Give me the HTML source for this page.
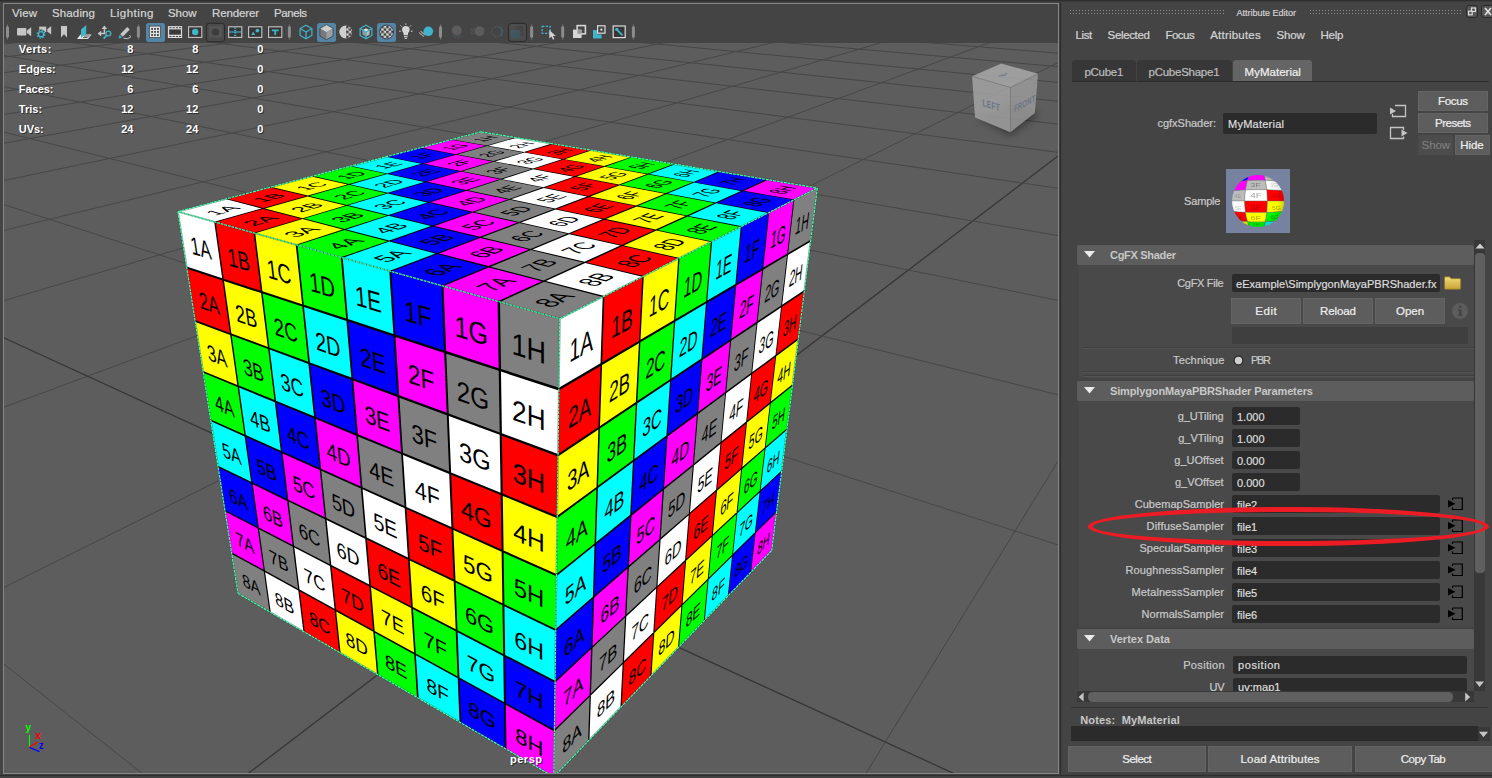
<!DOCTYPE html>
<html><head><meta charset="utf-8"><title>Maya</title>
<style>
html,body{margin:0;padding:0}
body{width:1492px;height:778px;overflow:hidden;background:#444;position:relative;font-family:"Liberation Sans",sans-serif;font-size:12px;color:#ccc}
.abs{position:absolute}
.t{position:absolute;white-space:pre;-webkit-text-stroke:0.22px}
svg{display:block}
#topstrip{left:0;top:0;width:1492px;height:1px;background:#2e2e2e;box-shadow:0 1px 0 #3b3b3b}
#vpframe{left:3px;top:3px;width:1054px;height:769px;border:1px solid #878787}
#split{left:1060px;top:2px;width:1px;height:773px;background:#2e2e2e;box-shadow:-1px 0 0 #3e3e3e,1px 0 0 #414141}
#botstrip{left:0;top:775px;width:1492px;height:1px;background:#2e2e2e;box-shadow:0 -1px 0 #404040,0 1px 0 #414141}

</style></head>
<body>
<div class="abs" id="topstrip"></div>
<div class="abs" id="vpframe"></div>
<div class="abs" id="split"></div>
<div class="abs" id="botstrip"></div>
<svg id="vp" width="1054" height="730" viewBox="4 43 1054 730" style="position:absolute;left:4px;top:43px">
<rect x="4" y="43" width="1054" height="730" fill="#5d5d5d"/>
<g stroke-width="1"><line x1="-50.0" y1="38.2" x2="398.6" y2="-8.3" stroke="#474747"/><line x1="-50.0" y1="50.0" x2="442.0" y2="-5.0" stroke="#474747"/><line x1="-50.0" y1="63.6" x2="488.2" y2="-1.5" stroke="#474747"/><line x1="-50.0" y1="79.8" x2="537.4" y2="2.2" stroke="#474747"/><line x1="-50.0" y1="99.3" x2="590.1" y2="6.2" stroke="#474747"/><line x1="-50.0" y1="123.2" x2="646.6" y2="10.5" stroke="#474747"/><line x1="-50.0" y1="153.1" x2="707.3" y2="15.1" stroke="#474747"/><line x1="-50.0" y1="191.8" x2="772.7" y2="20.0" stroke="#474747"/><line x1="-50.0" y1="243.6" x2="843.4" y2="25.4" stroke="#474747"/><line x1="-50.0" y1="316.5" x2="920.1" y2="31.2" stroke="#474747"/><line x1="-50.0" y1="427.1" x2="1003.5" y2="37.5" stroke="#474747"/><line x1="-50.0" y1="614.4" x2="1094.6" y2="44.4" stroke="#474747"/><line x1="-50.0" y1="621.4" x2="239.0" y2="850.0" stroke="#474747"/><line x1="147.8" y1="850.0" x2="1150.0" y2="85.8" stroke="#363636" stroke-width="1.3"/><line x1="-50.0" y1="313.1" x2="1120.7" y2="850.0" stroke="#363636" stroke-width="1.3"/><line x1="818.9" y1="850.0" x2="1150.0" y2="311.4" stroke="#474747"/><line x1="-50.0" y1="187.2" x2="1150.0" y2="574.6" stroke="#474747"/><line x1="-50.0" y1="118.7" x2="1150.0" y2="417.7" stroke="#474747"/><line x1="-50.0" y1="75.7" x2="1150.0" y2="319.0" stroke="#474747"/><line x1="-50.0" y1="46.2" x2="1150.0" y2="251.3" stroke="#474747"/><line x1="4.0" y1="32.6" x2="1150.0" y2="201.9" stroke="#474747"/><line x1="78.2" y1="24.9" x2="1150.0" y2="164.3" stroke="#474747"/><line x1="145.0" y1="18.0" x2="1150.0" y2="134.8" stroke="#474747"/><line x1="205.4" y1="11.8" x2="1150.0" y2="110.9" stroke="#474747"/><line x1="260.3" y1="6.1" x2="1150.0" y2="91.2" stroke="#474747"/><line x1="310.5" y1="0.9" x2="1150.0" y2="74.7" stroke="#474747"/><line x1="356.4" y1="-3.9" x2="1150.0" y2="60.7" stroke="#474747"/><line x1="398.6" y1="-8.3" x2="1150.0" y2="48.6" stroke="#474747"/></g>
<polygon points="177.9,211.6 481.0,131.8 817.3,188.0 559.8,318.7" fill="#000"/>
<polygon points="177.9,211.6 225.3,199.1 261.5,208.5 214.2,221.8" fill="#ffffff"/>
<polygon points="227.1,198.7 270.0,187.4 306.1,196.1 263.4,208.0" fill="#ff0000"/>
<polygon points="271.7,186.9 311.4,176.4 347.4,184.5 307.8,195.6" fill="#ffff00"/>
<polygon points="313.0,176.0 350.0,166.3 385.7,173.8 349.0,184.1" fill="#00ff00"/>
<polygon points="351.5,165.9 385.9,156.8 421.3,163.8 387.1,173.4" fill="#00ffff"/>
<polygon points="387.3,156.5 419.5,148.0 454.5,154.5 422.7,163.4" fill="#0000ff"/>
<polygon points="420.8,147.6 451.0,139.7 485.6,145.8 455.8,154.2" fill="#ff00ff"/>
<polygon points="452.2,139.4 481.0,131.8 515.3,137.5 486.8,145.5" fill="#808080"/>
<polygon points="215.7,222.2 263.0,208.9 300.8,218.7 253.6,232.8" fill="#ff0000"/>
<polygon points="264.9,208.4 307.6,196.4 345.2,205.4 302.7,218.2" fill="#ffff00"/>
<polygon points="309.3,195.9 348.9,184.8 386.2,193.2 346.9,204.9" fill="#00ff00"/>
<polygon points="350.5,184.4 387.2,174.1 424.1,181.9 387.8,192.7" fill="#00ffff"/>
<polygon points="388.6,173.7 422.8,164.1 459.4,171.3 425.6,181.4" fill="#0000ff"/>
<polygon points="424.2,163.7 456.0,154.8 492.2,161.5 460.7,170.9" fill="#ff00ff"/>
<polygon points="457.3,154.4 487.1,146.1 522.8,152.4 493.4,161.1" fill="#808080"/>
<polygon points="488.3,145.7 516.7,137.7 552.0,143.6 523.9,152.0" fill="#ffffff"/>
<polygon points="255.2,233.3 302.5,219.1 342.7,229.6 295.7,244.7" fill="#ffff00"/>
<polygon points="304.3,218.6 346.8,205.8 386.8,215.4 344.6,229.0" fill="#00ff00"/>
<polygon points="348.5,205.3 387.8,193.6 427.3,202.4 388.5,214.9" fill="#00ffff"/>
<polygon points="389.4,193.1 425.7,182.2 464.8,190.4 428.9,201.9" fill="#0000ff"/>
<polygon points="427.2,181.8 460.9,171.6 499.5,179.3 466.3,189.9" fill="#ff00ff"/>
<polygon points="462.3,171.2 493.7,161.8 531.8,168.9 500.9,178.8" fill="#808080"/>
<polygon points="495.0,161.4 524.3,152.6 561.8,159.3 533.0,168.5" fill="#ffffff"/>
<polygon points="525.5,152.3 553.5,143.9 590.5,150.1 563.0,158.9" fill="#ff0000"/>
<polygon points="297.5,245.1 344.5,230.0 387.5,241.2 340.8,257.3" fill="#00ff00"/>
<polygon points="346.3,229.4 388.5,215.8 431.0,226.1 389.3,240.5" fill="#00ffff"/>
<polygon points="390.2,215.3 429.0,202.8 471.1,212.2 432.7,225.5" fill="#0000ff"/>
<polygon points="430.6,202.3 466.5,190.8 507.9,199.5 472.6,211.7" fill="#ff00ff"/>
<polygon points="467.9,190.3 501.2,179.6 542.0,187.6 509.3,199.0" fill="#808080"/>
<polygon points="502.5,179.2 533.4,169.2 573.6,176.7 543.3,187.2" fill="#ffffff"/>
<polygon points="534.7,168.8 563.5,159.5 603.0,166.5 574.8,176.3" fill="#ff0000"/>
<polygon points="564.6,159.2 592.0,150.3 631.0,156.9 604.2,166.1" fill="#ffff00"/>
<polygon points="342.7,257.8 389.3,241.6 435.3,253.6 389.3,270.9" fill="#00ffff"/>
<polygon points="391.1,241.0 432.9,226.5 478.3,237.4 437.1,252.9" fill="#0000ff"/>
<polygon points="434.5,225.9 472.9,212.6 517.6,222.6 479.9,236.8" fill="#ff00ff"/>
<polygon points="474.4,212.1 509.7,199.8 553.7,209.1 519.1,222.1" fill="#808080"/>
<polygon points="511.1,199.3 543.8,188.0 587.0,196.5 555.1,208.5" fill="#ffffff"/>
<polygon points="545.1,187.5 575.4,177.0 617.9,184.9 588.3,196.1" fill="#ff0000"/>
<polygon points="576.6,176.6 604.7,166.8 646.5,174.2 619.0,184.5" fill="#ffff00"/>
<polygon points="605.8,166.4 632.6,157.1 673.6,164.0 647.6,173.8" fill="#00ff00"/>
<polygon points="391.3,271.4 437.3,254.1 486.7,266.9 441.4,285.5" fill="#0000ff"/>
<polygon points="439.1,253.4 480.2,237.9 528.8,249.6 488.5,266.1" fill="#ff00ff"/>
<polygon points="481.9,237.3 519.5,223.1 567.2,233.8 530.4,248.9" fill="#808080"/>
<polygon points="521.0,222.5 555.6,209.5 602.4,219.3 568.7,233.2" fill="#ffffff"/>
<polygon points="557.0,208.9 588.9,196.9 634.8,206.0 603.7,218.7" fill="#ff0000"/>
<polygon points="590.2,196.4 619.7,185.3 664.7,193.7 636.0,205.5" fill="#ffff00"/>
<polygon points="620.9,184.8 648.2,174.5 692.4,182.3 665.8,193.2" fill="#00ff00"/>
<polygon points="649.3,174.1 675.3,164.3 718.5,171.5 693.4,181.9" fill="#00ffff"/>
<polygon points="443.5,286.1 488.8,267.4 541.9,281.2 497.6,301.3" fill="#ff00ff"/>
<polygon points="490.6,266.7 530.9,250.1 582.9,262.6 543.6,280.4" fill="#808080"/>
<polygon points="532.5,249.4 569.2,234.2 620.2,245.6 584.5,261.8" fill="#ffffff"/>
<polygon points="570.7,233.6 604.4,219.7 654.3,230.2 621.6,245.0" fill="#ff0000"/>
<polygon points="605.8,219.1 636.8,206.4 685.5,216.0 655.6,229.6" fill="#ffff00"/>
<polygon points="638.0,205.8 666.6,194.0 714.3,202.9 686.7,215.4" fill="#00ff00"/>
<polygon points="667.8,193.6 694.2,182.6 740.9,190.9 715.4,202.4" fill="#00ffff"/>
<polygon points="695.3,182.2 720.4,171.8 766.0,179.5 741.9,190.4" fill="#0000ff"/>
<polygon points="500.0,301.9 544.2,281.7 602.7,296.9 559.8,318.7" fill="#808080"/>
<polygon points="545.9,281.0 585.2,263.1 642.3,276.8 604.4,296.1" fill="#ffffff"/>
<polygon points="586.7,262.4 622.4,246.1 678.2,258.6 643.8,276.1" fill="#ff0000"/>
<polygon points="623.8,245.5 656.4,230.6 710.8,242.0 679.5,257.9" fill="#ffff00"/>
<polygon points="657.7,230.0 687.6,216.4 740.7,226.9 712.1,241.4" fill="#00ff00"/>
<polygon points="688.8,215.9 716.4,203.3 768.2,213.0 741.9,226.3" fill="#00ffff"/>
<polygon points="717.5,202.8 742.9,191.2 793.4,200.1 769.2,212.4" fill="#0000ff"/>
<polygon points="743.9,190.8 768.0,179.8 817.3,188.0 794.4,199.6" fill="#ff00ff"/>
<g font-family="Liberation Sans, Arial, sans-serif" font-size="45" text-anchor="middle" fill="#000">
<text transform="matrix(0.4826 -0.1311 0.3703 0.0996 220.77 210.04)" y="20">1A</text>
<text transform="matrix(0.4457 -0.1210 0.3696 0.0920 267.15 197.44)" y="20">1B</text>
<text transform="matrix(0.4129 -0.1121 0.3680 0.0852 310.05 185.79)" y="20">1C</text>
<text transform="matrix(0.3836 -0.1042 0.3657 0.0792 349.85 174.98)" y="20">1D</text>
<text transform="matrix(0.3573 -0.0970 0.3628 0.0737 386.87 164.93)" y="20">1E</text>
<text transform="matrix(0.3336 -0.0906 0.3594 0.0688 421.40 155.55)" y="20">1F</text>
<text transform="matrix(0.3122 -0.0848 0.3557 0.0644 453.67 146.79)" y="20">1G</text>
<text transform="matrix(0.2928 -0.0795 0.3518 0.0604 483.91 138.58)" y="20">1H</text>
<text transform="matrix(0.4820 -0.1395 0.3943 0.1061 258.98 220.32)" y="20">2A</text>
<text transform="matrix(0.4441 -0.1286 0.3926 0.0977 305.24 206.92)" y="20">2B</text>
<text transform="matrix(0.4104 -0.1188 0.3900 0.0903 347.93 194.56)" y="20">2C</text>
<text transform="matrix(0.3805 -0.1102 0.3867 0.0837 387.45 183.12)" y="20">2D</text>
<text transform="matrix(0.3537 -0.1024 0.3829 0.0778 424.14 172.50)" y="20">2E</text>
<text transform="matrix(0.3296 -0.0954 0.3786 0.0725 458.29 162.62)" y="20">2F</text>
<text transform="matrix(0.3080 -0.0892 0.3741 0.0677 490.15 153.39)" y="20">2G</text>
<text transform="matrix(0.2884 -0.0835 0.3693 0.0634 519.95 144.76)" y="20">2H</text>
<text transform="matrix(0.4803 -0.1489 0.4207 0.1132 299.70 231.27)" y="20">3A</text>
<text transform="matrix(0.4413 -0.1368 0.4178 0.1040 345.74 217.00)" y="20">3B</text>
<text transform="matrix(0.4069 -0.1261 0.4140 0.0959 388.12 203.87)" y="20">3C</text>
<text transform="matrix(0.3764 -0.1167 0.4096 0.0887 427.25 191.74)" y="20">3D</text>
<text transform="matrix(0.3491 -0.1082 0.4047 0.0822 463.50 180.50)" y="20">3E</text>
<text transform="matrix(0.3248 -0.1007 0.3994 0.0765 497.17 170.06)" y="20">3F</text>
<text transform="matrix(0.3028 -0.0939 0.3939 0.0713 528.54 160.34)" y="20">3G</text>
<text transform="matrix(0.2831 -0.0877 0.3882 0.0667 557.82 151.27)" y="20">3H</text>
<text transform="matrix(0.4772 -0.1592 0.4498 0.1210 343.20 242.98)" y="20">4A</text>
<text transform="matrix(0.4372 -0.1458 0.4455 0.1109 388.88 227.74)" y="20">4B</text>
<text transform="matrix(0.4021 -0.1341 0.4403 0.1020 430.81 213.75)" y="20">4C</text>
<text transform="matrix(0.3710 -0.1238 0.4345 0.0941 469.44 200.87)" y="20">4D</text>
<text transform="matrix(0.3434 -0.1146 0.4284 0.0871 505.14 188.96)" y="20">4E</text>
<text transform="matrix(0.3188 -0.1063 0.4219 0.0808 538.23 177.93)" y="20">4F</text>
<text transform="matrix(0.2967 -0.0990 0.4153 0.0752 568.98 167.67)" y="20">4G</text>
<text transform="matrix(0.2769 -0.0924 0.4086 0.0702 597.65 158.11)" y="20">4H</text>
<text transform="matrix(0.4725 -0.1706 0.4821 0.1297 389.77 255.50)" y="20">5A</text>
<text transform="matrix(0.4316 -0.1558 0.4760 0.1185 434.93 239.20)" y="20">5B</text>
<text transform="matrix(0.3958 -0.1429 0.4692 0.1086 476.26 224.28)" y="20">5C</text>
<text transform="matrix(0.3643 -0.1315 0.4619 0.1000 514.24 210.57)" y="20">5D</text>
<text transform="matrix(0.3364 -0.1215 0.4542 0.0923 549.25 197.93)" y="20">5E</text>
<text transform="matrix(0.3116 -0.1125 0.4464 0.0855 581.63 186.24)" y="20">5F</text>
<text transform="matrix(0.2895 -0.1045 0.4386 0.0794 611.66 175.39)" y="20">5G</text>
<text transform="matrix(0.2696 -0.0973 0.4307 0.0740 639.60 165.31)" y="20">5H</text>
<text transform="matrix(0.4658 -0.1833 0.5180 0.1393 439.74 268.95)" y="20">6A</text>
<text transform="matrix(0.4241 -0.1669 0.5098 0.1269 484.19 251.46)" y="20">6B</text>
<text transform="matrix(0.3878 -0.1526 0.5010 0.1160 524.74 235.50)" y="20">6C</text>
<text transform="matrix(0.3560 -0.1401 0.4918 0.1065 561.90 220.88)" y="20">6D</text>
<text transform="matrix(0.3279 -0.1290 0.4825 0.0981 596.06 207.44)" y="20">6E</text>
<text transform="matrix(0.3030 -0.1192 0.4732 0.0906 627.59 195.04)" y="20">6F</text>
<text transform="matrix(0.2809 -0.1105 0.4638 0.0840 656.76 183.56)" y="20">6G</text>
<text transform="matrix(0.2611 -0.1027 0.4546 0.0781 683.84 172.91)" y="20">6H</text>
<text transform="matrix(0.4567 -0.1974 0.5580 0.1501 493.50 283.41)" y="20">7A</text>
<text transform="matrix(0.4144 -0.1791 0.5473 0.1362 537.00 264.61)" y="20">7B</text>
<text transform="matrix(0.3777 -0.1633 0.5361 0.1241 576.57 247.50)" y="20">7C</text>
<text transform="matrix(0.3457 -0.1494 0.5248 0.1136 612.70 231.88)" y="20">7D</text>
<text transform="matrix(0.3176 -0.1373 0.5135 0.1044 645.84 217.56)" y="20">7E</text>
<text transform="matrix(0.2928 -0.1266 0.5023 0.0962 676.34 204.38)" y="20">7F</text>
<text transform="matrix(0.2708 -0.1170 0.4913 0.0890 704.50 192.20)" y="20">7G</text>
<text transform="matrix(0.2512 -0.1086 0.4805 0.0825 730.57 180.93)" y="20">7H</text>
<text transform="matrix(0.4447 -0.2133 0.6029 0.1622 551.50 299.01)" y="20">8A</text>
<text transform="matrix(0.4020 -0.1928 0.5891 0.1466 593.78 278.74)" y="20">8B</text>
<text transform="matrix(0.3652 -0.1751 0.5751 0.1332 632.09 260.36)" y="20">8C</text>
<text transform="matrix(0.3332 -0.1598 0.5613 0.1215 666.98 243.63)" y="20">8D</text>
<text transform="matrix(0.3052 -0.1464 0.5476 0.1113 698.87 228.34)" y="20">8E</text>
<text transform="matrix(0.2807 -0.1346 0.5343 0.1023 728.14 214.30)" y="20">8F</text>
<text transform="matrix(0.2589 -0.1242 0.5213 0.0944 755.10 201.37)" y="20">8G</text>
<text transform="matrix(0.2397 -0.1149 0.5087 0.0874 780.01 189.42)" y="20">8H</text>
</g>
<polygon points="177.9,211.6 559.8,318.7 553.8,776.8 238.0,593.5" fill="#000"/>
<polygon points="177.9,211.6 214.2,221.8 222.2,278.2 186.6,266.6" fill="#ffffff"/>
<polygon points="215.7,222.2 253.6,232.8 260.8,290.8 223.7,278.7" fill="#ff0000"/>
<polygon points="255.2,233.3 295.7,244.7 302.1,304.2 262.4,291.3" fill="#ffff00"/>
<polygon points="297.5,245.1 340.8,257.3 346.2,318.5 303.8,304.8" fill="#00ff00"/>
<polygon points="342.7,257.8 389.3,270.9 393.4,333.9 348.0,319.1" fill="#00ffff"/>
<polygon points="391.3,271.4 441.4,285.5 444.1,350.4 395.3,334.6" fill="#0000ff"/>
<polygon points="443.5,286.1 497.6,301.3 498.7,368.2 446.2,351.1" fill="#ff00ff"/>
<polygon points="500.0,301.9 559.8,318.7 558.9,387.8 501.0,368.9" fill="#808080"/>
<polygon points="186.9,268.8 222.5,280.4 229.9,332.9 195.0,320.0" fill="#ff0000"/>
<polygon points="224.0,280.9 261.1,293.1 267.8,346.9 231.4,333.4" fill="#ffff00"/>
<polygon points="262.7,293.6 302.3,306.6 308.2,361.7 269.4,347.4" fill="#00ff00"/>
<polygon points="304.0,307.1 346.4,321.0 351.3,377.6 309.9,362.4" fill="#00ffff"/>
<polygon points="348.2,321.6 393.5,336.4 397.3,394.6 353.1,378.3" fill="#0000ff"/>
<polygon points="395.5,337.1 444.2,353.0 446.7,412.8 399.2,395.3" fill="#ff00ff"/>
<polygon points="446.3,353.7 498.7,370.8 499.7,432.4 448.7,413.6" fill="#808080"/>
<polygon points="501.0,371.6 558.8,390.5 558.0,453.9 501.9,433.2" fill="#ffffff"/>
<polygon points="195.3,322.1 230.2,335.0 237.3,384.9 203.0,370.9" fill="#ffff00"/>
<polygon points="231.7,335.6 268.1,349.1 274.5,400.1 238.8,385.5" fill="#00ff00"/>
<polygon points="269.7,349.6 308.4,364.0 314.0,416.3 276.0,400.8" fill="#00ffff"/>
<polygon points="310.1,364.6 351.5,379.9 356.1,433.5 315.7,417.0" fill="#0000ff"/>
<polygon points="353.3,380.6 397.5,397.0 401.0,451.9 357.9,434.2" fill="#ff00ff"/>
<polygon points="399.4,397.7 446.8,415.2 449.1,471.6 402.9,452.7" fill="#808080"/>
<polygon points="448.8,416.0 499.7,434.8 500.6,492.7 451.1,472.4" fill="#ffffff"/>
<polygon points="501.9,435.7 558.0,456.4 557.2,515.8 502.8,493.6" fill="#ff0000"/>
<polygon points="203.3,372.8 237.6,386.9 244.4,434.5 210.6,419.4" fill="#00ff00"/>
<polygon points="239.1,387.5 274.8,402.2 280.8,450.8 245.8,435.1" fill="#00ffff"/>
<polygon points="276.3,402.8 314.2,418.4 319.5,468.1 282.3,451.4" fill="#0000ff"/>
<polygon points="315.9,419.1 356.3,435.7 360.7,486.5 321.1,468.8" fill="#ff00ff"/>
<polygon points="358.0,436.4 401.2,454.1 404.6,506.1 362.4,487.3" fill="#808080"/>
<polygon points="403.0,454.9 449.2,473.9 451.4,527.1 406.4,507.0" fill="#ffffff"/>
<polygon points="451.2,474.7 500.7,495.0 501.5,549.5 453.4,528.0" fill="#ff0000"/>
<polygon points="502.8,495.9 557.2,518.2 556.4,574.1 503.6,550.5" fill="#ffff00"/>
<polygon points="210.9,421.2 244.6,436.4 251.1,481.7 217.9,465.7" fill="#00ffff"/>
<polygon points="246.0,437.0 281.1,452.7 286.8,499.0 252.5,482.4" fill="#0000ff"/>
<polygon points="282.6,453.4 319.8,470.1 324.8,517.3 288.3,499.7" fill="#ff00ff"/>
<polygon points="321.3,470.8 360.9,488.6 365.1,536.8 326.3,518.1" fill="#808080"/>
<polygon points="362.6,489.3 404.7,508.3 407.9,557.5 366.7,537.6" fill="#ffffff"/>
<polygon points="406.5,509.1 451.5,529.3 453.6,579.6 409.7,558.4" fill="#ff0000"/>
<polygon points="453.4,530.1 501.6,551.7 502.4,603.2 455.5,580.5" fill="#ffff00"/>
<polygon points="503.6,552.7 556.4,576.3 555.7,629.0 504.4,604.2" fill="#00ff00"/>
<polygon points="218.2,467.5 251.3,483.5 257.5,526.8 224.9,509.9" fill="#0000ff"/>
<polygon points="252.7,484.2 287.1,500.9 292.6,544.9 258.8,527.5" fill="#ff00ff"/>
<polygon points="288.6,501.6 325.0,519.2 329.8,564.2 294.0,545.7" fill="#808080"/>
<polygon points="326.6,520.0 365.2,538.8 369.2,584.6 331.3,565.0" fill="#ffffff"/>
<polygon points="366.9,539.6 408.0,559.5 411.1,606.2 370.8,585.4" fill="#ff0000"/>
<polygon points="409.8,560.4 453.7,581.6 455.7,629.3 412.8,607.1" fill="#ffff00"/>
<polygon points="455.6,582.6 502.4,605.3 503.2,653.9 457.5,630.3" fill="#00ff00"/>
<polygon points="504.4,606.2 555.7,631.1 555.0,680.7 505.2,654.9" fill="#00ffff"/>
<polygon points="225.1,511.6 257.7,528.5 263.6,569.8 231.5,552.2" fill="#ff00ff"/>
<polygon points="259.1,529.2 292.8,546.7 298.1,588.8 264.9,570.6" fill="#808080"/>
<polygon points="294.3,547.5 330.0,566.0 334.5,608.8 299.5,589.6" fill="#ffffff"/>
<polygon points="331.5,566.8 369.4,586.4 373.1,630.0 336.0,609.6" fill="#ff0000"/>
<polygon points="371.0,587.3 411.2,608.1 414.1,652.5 374.7,630.9" fill="#ffff00"/>
<polygon points="412.9,609.0 455.7,631.2 457.6,676.5 415.8,653.5" fill="#00ff00"/>
<polygon points="457.6,632.2 503.2,655.9 503.9,701.9 459.4,677.5" fill="#00ffff"/>
<polygon points="505.2,656.9 555.0,682.7 554.4,729.6 505.9,703.0" fill="#0000ff"/>
<polygon points="231.8,553.9 263.8,571.5 269.5,611.8 238.0,593.5" fill="#808080"/>
<polygon points="265.1,572.2 298.3,590.5 303.4,631.5 270.8,612.6" fill="#ffffff"/>
<polygon points="299.7,591.3 334.7,610.6 339.2,652.2 304.8,632.3" fill="#ff0000"/>
<polygon points="336.2,611.4 373.3,631.8 377.0,674.2 340.6,653.1" fill="#ffff00"/>
<polygon points="374.9,632.7 414.2,654.4 417.0,697.4 378.5,675.1" fill="#00ff00"/>
<polygon points="415.9,655.3 457.7,678.3 459.5,722.1 418.7,698.4" fill="#00ffff"/>
<polygon points="459.5,679.3 504.0,703.8 504.7,748.3 461.3,723.1" fill="#0000ff"/>
<polygon points="505.9,704.8 554.4,731.5 553.8,776.8 506.5,749.4" fill="#ff00ff"/>
<g font-family="Liberation Sans, Arial, sans-serif" font-size="45" text-anchor="middle" fill="#000">
<text transform="matrix(0.3668 0.1114 0.0850 0.5680 200.44 245.50)" y="20">1A</text>
<text transform="matrix(0.3907 0.1187 0.0777 0.5832 238.30 256.99)" y="20">1B</text>
<text transform="matrix(0.4171 0.1267 0.0692 0.5992 278.67 269.26)" y="20">1C</text>
<text transform="matrix(0.4462 0.1356 0.0594 0.6161 321.81 282.36)" y="20">1D</text>
<text transform="matrix(0.4785 0.1454 0.0480 0.6338 368.02 296.40)" y="20">1E</text>
<text transform="matrix(0.5145 0.1563 0.0346 0.6526 417.64 311.47)" y="20">1F</text>
<text transform="matrix(0.5546 0.1685 0.0191 0.6725 471.05 327.70)" y="20">1G</text>
<text transform="matrix(0.5997 0.1822 0.0010 0.6935 528.72 345.22)" y="20">1H</text>
<text transform="matrix(0.3601 0.1254 0.0808 0.5399 208.73 300.87)" y="20">2A</text>
<text transform="matrix(0.3830 0.1334 0.0737 0.5535 245.87 313.81)" y="20">2B</text>
<text transform="matrix(0.4082 0.1422 0.0656 0.5677 285.41 327.58)" y="20">2C</text>
<text transform="matrix(0.4359 0.1518 0.0562 0.5826 327.59 342.27)" y="20">2D</text>
<text transform="matrix(0.4665 0.1625 0.0453 0.5983 372.68 357.98)" y="20">2E</text>
<text transform="matrix(0.5005 0.1743 0.0326 0.6147 421.00 374.81)" y="20">2F</text>
<text transform="matrix(0.5383 0.1875 0.0180 0.6320 472.91 392.89)" y="20">2G</text>
<text transform="matrix(0.5806 0.2022 0.0009 0.6501 528.81 412.36)" y="20">2H</text>
<text transform="matrix(0.3537 0.1380 0.0769 0.5139 216.61 353.55)" y="20">3A</text>
<text transform="matrix(0.3756 0.1465 0.0701 0.5260 253.05 367.77)" y="20">3B</text>
<text transform="matrix(0.3996 0.1559 0.0622 0.5386 291.79 382.88)" y="20">3C</text>
<text transform="matrix(0.4260 0.1662 0.0532 0.5518 333.05 398.98)" y="20">3D</text>
<text transform="matrix(0.4551 0.1775 0.0428 0.5656 377.08 416.15)" y="20">3E</text>
<text transform="matrix(0.4873 0.1901 0.0308 0.5800 424.17 434.52)" y="20">3F</text>
<text transform="matrix(0.5230 0.2040 0.0169 0.5950 474.65 454.21)" y="20">3G</text>
<text transform="matrix(0.5628 0.2196 0.0008 0.6107 528.90 475.38)" y="20">3H</text>
<text transform="matrix(0.3474 0.1492 0.0733 0.4897 224.12 403.71)" y="20">4A</text>
<text transform="matrix(0.3684 0.1582 0.0667 0.5005 259.89 419.08)" y="20">4B</text>
<text transform="matrix(0.3914 0.1681 0.0591 0.5117 297.86 435.38)" y="20">4C</text>
<text transform="matrix(0.4165 0.1789 0.0505 0.5234 338.23 452.72)" y="20">4D</text>
<text transform="matrix(0.4442 0.1907 0.0405 0.5355 381.24 471.19)" y="20">4E</text>
<text transform="matrix(0.4747 0.2038 0.0291 0.5481 427.16 490.91)" y="20">4F</text>
<text transform="matrix(0.5085 0.2184 0.0160 0.5612 476.29 512.00)" y="20">4G</text>
<text transform="matrix(0.5460 0.2345 0.0008 0.5748 528.98 534.63)" y="20">4H</text>
<text transform="matrix(0.3414 0.1592 0.0699 0.4672 231.27 451.54)" y="20">5A</text>
<text transform="matrix(0.3615 0.1686 0.0635 0.4768 266.40 467.93)" y="20">5B</text>
<text transform="matrix(0.3834 0.1788 0.0562 0.4868 303.63 485.29)" y="20">5C</text>
<text transform="matrix(0.4074 0.1900 0.0479 0.4971 343.15 503.73)" y="20">5D</text>
<text transform="matrix(0.4338 0.2023 0.0384 0.5078 385.19 523.34)" y="20">5E</text>
<text transform="matrix(0.4628 0.2159 0.0275 0.5188 429.99 544.23)" y="20">5F</text>
<text transform="matrix(0.4948 0.2308 0.0151 0.5302 477.84 566.55)" y="20">5G</text>
<text transform="matrix(0.5302 0.2473 0.0007 0.5419 529.06 590.44)" y="20">5H</text>
<text transform="matrix(0.3355 0.1682 0.0668 0.4461 238.10 497.20)" y="20">6A</text>
<text transform="matrix(0.3548 0.1779 0.0606 0.4548 272.60 514.49)" y="20">6B</text>
<text transform="matrix(0.3758 0.1884 0.0536 0.4636 309.11 532.80)" y="20">6C</text>
<text transform="matrix(0.3987 0.1999 0.0456 0.4728 347.82 552.21)" y="20">6D</text>
<text transform="matrix(0.4239 0.2125 0.0365 0.4822 388.93 572.82)" y="20">6E</text>
<text transform="matrix(0.4514 0.2263 0.0261 0.4918 432.68 594.75)" y="20">6F</text>
<text transform="matrix(0.4818 0.2415 0.0143 0.5017 479.31 618.13)" y="20">6G</text>
<text transform="matrix(0.5153 0.2583 0.0007 0.5118 529.13 643.11)" y="20">6H</text>
<text transform="matrix(0.3298 0.1762 0.0638 0.4265 244.63 540.82)" y="20">7A</text>
<text transform="matrix(0.3483 0.1861 0.0578 0.4342 278.52 558.93)" y="20">7B</text>
<text transform="matrix(0.3685 0.1969 0.0511 0.4421 314.35 578.07)" y="20">7C</text>
<text transform="matrix(0.3904 0.2086 0.0434 0.4502 352.27 598.34)" y="20">7D</text>
<text transform="matrix(0.4144 0.2214 0.0347 0.4584 392.49 619.83)" y="20">7E</text>
<text transform="matrix(0.4406 0.2354 0.0248 0.4668 435.22 642.66)" y="20">7F</text>
<text transform="matrix(0.4694 0.2508 0.0135 0.4754 480.70 666.97)" y="20">7G</text>
<text transform="matrix(0.5012 0.2678 0.0007 0.4841 529.20 692.88)" y="20">7H</text>
<text transform="matrix(0.3242 0.1834 0.0611 0.4082 250.88 582.55)" y="20">8A</text>
<text transform="matrix(0.3421 0.1935 0.0553 0.4150 284.18 601.38)" y="20">8B</text>
<text transform="matrix(0.3614 0.2044 0.0488 0.4220 319.34 621.27)" y="20">8C</text>
<text transform="matrix(0.3824 0.2163 0.0414 0.4291 356.51 642.29)" y="20">8D</text>
<text transform="matrix(0.4053 0.2292 0.0330 0.4364 395.88 664.56)" y="20">8E</text>
<text transform="matrix(0.4303 0.2434 0.0236 0.4437 437.64 688.18)" y="20">8F</text>
<text transform="matrix(0.4577 0.2589 0.0128 0.4512 482.01 713.28)" y="20">8G</text>
<text transform="matrix(0.4878 0.2759 0.0006 0.4586 529.26 740.00)" y="20">8H</text>
</g>
<polygon points="559.8,318.7 817.3,188.0 771.7,550.6 553.8,776.8" fill="#000"/>
<polygon points="559.8,318.7 602.7,296.9 600.5,363.3 558.9,387.8" fill="#ffffff"/>
<polygon points="604.4,296.1 642.3,276.8 639.1,340.7 602.2,362.3" fill="#ff0000"/>
<polygon points="643.8,276.1 678.2,258.6 674.1,320.1 640.5,339.8" fill="#ffff00"/>
<polygon points="679.5,257.9 710.8,242.0 706.1,301.3 675.4,319.3" fill="#00ff00"/>
<polygon points="712.1,241.4 740.7,226.9 735.4,284.0 707.3,300.5" fill="#00ffff"/>
<polygon points="741.9,226.3 768.2,213.0 762.4,268.2 736.5,283.4" fill="#0000ff"/>
<polygon points="769.2,212.4 793.4,200.1 787.3,253.5 763.4,267.6" fill="#ff00ff"/>
<polygon points="794.4,199.6 817.3,188.0 810.8,239.7 788.2,253.0" fill="#808080"/>
<polygon points="558.8,390.5 600.5,365.9 598.4,427.0 558.0,453.9" fill="#ff0000"/>
<polygon points="602.1,365.0 638.9,343.2 635.9,402.0 600.0,425.9" fill="#ffff00"/>
<polygon points="640.4,342.3 673.9,322.5 670.1,379.3 637.4,401.1" fill="#00ff00"/>
<polygon points="675.2,321.7 705.9,303.6 701.4,358.5 671.4,378.4" fill="#00ffff"/>
<polygon points="707.1,302.9 735.2,286.3 730.2,339.4 702.6,357.7" fill="#0000ff"/>
<polygon points="736.3,285.6 762.1,270.4 756.7,321.8 731.3,338.7" fill="#ff00ff"/>
<polygon points="763.2,269.7 787.0,255.6 781.2,305.5 757.7,321.1" fill="#808080"/>
<polygon points="788.0,255.1 810.5,241.8 804.4,290.0 782.2,304.8" fill="#ffffff"/>
<polygon points="558.0,456.4 598.4,429.4 596.5,486.9 557.2,515.8" fill="#ffff00"/>
<polygon points="599.9,428.4 635.8,404.4 633.0,460.0 598.0,485.8" fill="#00ff00"/>
<polygon points="637.2,403.5 670.0,381.6 666.4,435.4 634.4,459.0" fill="#00ffff"/>
<polygon points="671.3,380.7 701.2,360.7 697.0,412.8 667.7,434.4" fill="#0000ff"/>
<polygon points="702.4,359.9 730.0,341.5 725.3,392.0 698.2,411.9" fill="#ff00ff"/>
<polygon points="731.1,340.8 756.5,323.9 751.3,372.8 726.3,391.2" fill="#808080"/>
<polygon points="757.5,323.2 781.0,307.5 775.5,355.0 752.3,372.1" fill="#ffffff"/>
<polygon points="781.9,306.9 804.2,292.0 798.4,338.1 776.4,354.3" fill="#ff0000"/>
<polygon points="557.2,518.2 596.4,489.2 594.6,543.4 556.4,574.1" fill="#00ff00"/>
<polygon points="597.9,488.1 632.9,462.2 630.2,514.7 596.1,542.2" fill="#00ffff"/>
<polygon points="634.3,461.2 666.2,437.6 662.9,488.5 631.6,513.6" fill="#0000ff"/>
<polygon points="667.5,436.6 696.9,414.9 692.9,464.4 664.1,487.5" fill="#ff00ff"/>
<polygon points="698.0,414.0 725.1,394.1 720.6,442.1 694.0,463.4" fill="#808080"/>
<polygon points="726.1,393.3 751.1,374.8 746.2,421.5 721.6,441.2" fill="#ffffff"/>
<polygon points="752.1,374.1 775.3,356.9 770.0,402.3 747.2,420.7" fill="#ff0000"/>
<polygon points="776.2,356.2 798.1,340.0 792.6,384.2 770.9,401.6" fill="#ffff00"/>
<polygon points="556.4,576.3 594.5,545.6 592.9,596.7 555.7,629.0" fill="#00ffff"/>
<polygon points="596.0,544.4 630.1,516.9 627.6,566.6 594.3,595.5" fill="#0000ff"/>
<polygon points="631.5,515.8 662.7,490.6 659.5,538.9 628.9,565.4" fill="#ff00ff"/>
<polygon points="664.0,489.6 692.7,466.4 688.9,513.4 660.7,537.8" fill="#808080"/>
<polygon points="693.9,465.4 720.4,444.0 716.1,489.8 690.0,512.4" fill="#ffffff"/>
<polygon points="721.4,443.2 746.0,423.4 741.3,467.9 717.1,488.9" fill="#ff0000"/>
<polygon points="747.0,422.6 769.8,404.2 764.8,447.6 742.3,467.1" fill="#ffff00"/>
<polygon points="770.7,403.4 792.4,386.0 787.1,428.2 765.7,446.8" fill="#00ff00"/>
<polygon points="555.7,631.1 592.8,598.8 591.2,647.2 555.0,680.7" fill="#0000ff"/>
<polygon points="594.2,597.5 627.5,568.6 625.1,615.7 592.6,645.9" fill="#ff00ff"/>
<polygon points="628.8,567.4 659.4,540.9 656.3,586.8 626.4,614.5" fill="#808080"/>
<polygon points="660.6,539.8 688.7,515.3 685.1,560.0 657.5,585.7" fill="#ffffff"/>
<polygon points="689.9,514.3 715.9,491.6 711.8,535.3 686.2,559.0" fill="#ff0000"/>
<polygon points="717.0,490.7 741.1,469.7 736.6,512.3 712.9,534.3" fill="#ffff00"/>
<polygon points="742.1,468.9 764.6,449.3 759.7,490.8 737.6,511.4" fill="#00ff00"/>
<polygon points="765.5,448.5 786.8,429.9 781.7,470.4 760.6,490.0" fill="#00ffff"/>
<polygon points="555.0,682.7 591.1,649.1 589.6,695.0 554.4,729.6" fill="#ff00ff"/>
<polygon points="592.5,647.8 625.0,617.6 622.7,662.4 591.0,693.6" fill="#808080"/>
<polygon points="626.3,616.4 656.2,588.6 653.3,632.3 624.0,661.1" fill="#ffffff"/>
<polygon points="657.4,587.5 685.0,561.9 681.5,604.5 654.4,631.2" fill="#ff0000"/>
<polygon points="686.1,560.8 711.7,537.1 707.8,578.7 682.6,603.5" fill="#ffff00"/>
<polygon points="712.7,536.1 736.5,514.0 732.2,554.7 708.8,577.7" fill="#00ff00"/>
<polygon points="737.4,513.1 759.6,492.5 754.9,532.3 733.1,553.8" fill="#00ffff"/>
<polygon points="760.4,491.7 781.5,472.1 776.6,510.9 755.8,531.4" fill="#0000ff"/>
<polygon points="554.4,731.5 589.6,696.8 588.1,741.2 553.8,776.8" fill="#808080"/>
<polygon points="590.9,695.5 622.6,664.2 620.4,707.6 589.5,739.8" fill="#ffffff"/>
<polygon points="623.9,662.9 653.2,634.1 650.3,676.6 621.7,706.3" fill="#ff0000"/>
<polygon points="654.3,633.0 681.4,606.3 678.0,647.8 651.5,675.4" fill="#ffff00"/>
<polygon points="682.5,605.2 707.6,580.4 703.8,621.1 679.1,646.7" fill="#00ff00"/>
<polygon points="708.6,579.4 732.0,556.4 727.8,596.1 704.8,620.0" fill="#00ffff"/>
<polygon points="732.9,555.4 754.8,533.9 750.2,572.8 728.7,595.2" fill="#0000ff"/>
<polygon points="755.6,533.1 776.4,512.5 771.7,550.6 751.1,571.9" fill="#ff00ff"/>
<g font-family="Liberation Sans, Arial, sans-serif" font-size="45" text-anchor="middle" fill="#000">
<text transform="matrix(0.4307 -0.2365 -0.0162 0.6902 581.42 342.37)" y="20">1A</text>
<text transform="matrix(0.3892 -0.2137 -0.0281 0.6631 622.36 319.88)" y="20">1B</text>
<text transform="matrix(0.3535 -0.1941 -0.0378 0.6379 659.45 299.51)" y="20">1C</text>
<text transform="matrix(0.3224 -0.1771 -0.0456 0.6145 693.21 280.98)" y="20">1D</text>
<text transform="matrix(0.2953 -0.1622 -0.0520 0.5926 724.07 264.03)" y="20">1E</text>
<text transform="matrix(0.2715 -0.1491 -0.0572 0.5722 752.38 248.48)" y="20">1F</text>
<text transform="matrix(0.2504 -0.1375 -0.0614 0.5531 778.46 234.17)" y="20">1G</text>
<text transform="matrix(0.2317 -0.1272 -0.0648 0.5352 802.54 220.94)" y="20">1H</text>
<text transform="matrix(0.4179 -0.2626 -0.0152 0.6472 579.85 409.20)" y="20">2A</text>
<text transform="matrix(0.3788 -0.2381 -0.0265 0.6238 619.63 384.20)" y="20">2B</text>
<text transform="matrix(0.3450 -0.2168 -0.0356 0.6018 655.79 361.47)" y="20">2C</text>
<text transform="matrix(0.3155 -0.1983 -0.0431 0.5812 688.78 340.74)" y="20">2D</text>
<text transform="matrix(0.2896 -0.1820 -0.0493 0.5619 719.01 321.74)" y="20">2E</text>
<text transform="matrix(0.2668 -0.1677 -0.0543 0.5437 746.81 304.26)" y="20">2F</text>
<text transform="matrix(0.2466 -0.1550 -0.0584 0.5266 772.47 288.14)" y="20">2G</text>
<text transform="matrix(0.2286 -0.1437 -0.0618 0.5105 796.21 273.21)" y="20">2H</text>
<text transform="matrix(0.4058 -0.2852 -0.0143 0.6082 578.37 471.95)" y="20">3A</text>
<text transform="matrix(0.3689 -0.2593 -0.0249 0.5879 617.07 444.76)" y="20">3B</text>
<text transform="matrix(0.3369 -0.2368 -0.0337 0.5687 652.32 419.98)" y="20">3C</text>
<text transform="matrix(0.3089 -0.2171 -0.0409 0.5506 684.58 397.31)" y="20">3D</text>
<text transform="matrix(0.2842 -0.1997 -0.0468 0.5335 714.21 376.49)" y="20">3E</text>
<text transform="matrix(0.2623 -0.1844 -0.0517 0.5173 741.52 357.30)" y="20">3F</text>
<text transform="matrix(0.2429 -0.1707 -0.0557 0.5020 766.76 339.55)" y="20">3G</text>
<text transform="matrix(0.2256 -0.1585 -0.0590 0.4875 790.17 323.10)" y="20">3H</text>
<text transform="matrix(0.3944 -0.3046 -0.0135 0.5726 576.98 530.97)" y="20">4A</text>
<text transform="matrix(0.3596 -0.2777 -0.0235 0.5550 614.64 501.88)" y="20">4B</text>
<text transform="matrix(0.3292 -0.2542 -0.0319 0.5383 649.05 475.31)" y="20">4C</text>
<text transform="matrix(0.3025 -0.2336 -0.0388 0.5223 680.60 450.93)" y="20">4D</text>
<text transform="matrix(0.2789 -0.2154 -0.0445 0.5071 709.65 428.50)" y="20">4E</text>
<text transform="matrix(0.2580 -0.1992 -0.0492 0.4927 736.47 407.78)" y="20">4F</text>
<text transform="matrix(0.2393 -0.1848 -0.0531 0.4790 761.32 388.59)" y="20">4G</text>
<text transform="matrix(0.2226 -0.1719 -0.0564 0.4660 784.40 370.76)" y="20">4H</text>
<text transform="matrix(0.3836 -0.3214 -0.0127 0.5401 575.67 586.58)" y="20">5A</text>
<text transform="matrix(0.3507 -0.2938 -0.0223 0.5248 612.35 555.85)" y="20">5B</text>
<text transform="matrix(0.3218 -0.2696 -0.0302 0.5102 645.95 527.71)" y="20">5C</text>
<text transform="matrix(0.2963 -0.2482 -0.0368 0.4962 676.83 501.84)" y="20">5D</text>
<text transform="matrix(0.2738 -0.2294 -0.0423 0.4827 705.31 477.98)" y="20">5E</text>
<text transform="matrix(0.2537 -0.2125 -0.0469 0.4699 731.67 455.90)" y="20">5F</text>
<text transform="matrix(0.2358 -0.1975 -0.0508 0.4576 756.13 435.41)" y="20">5G</text>
<text transform="matrix(0.2197 -0.1840 -0.0540 0.4458 778.89 416.34)" y="20">5H</text>
<text transform="matrix(0.3734 -0.3358 -0.0120 0.5102 574.44 639.07)" y="20">6A</text>
<text transform="matrix(0.3422 -0.3077 -0.0211 0.4970 610.19 606.93)" y="20">6B</text>
<text transform="matrix(0.3147 -0.2830 -0.0287 0.4843 643.00 577.42)" y="20">6C</text>
<text transform="matrix(0.2904 -0.2612 -0.0350 0.4719 673.24 550.23)" y="20">6D</text>
<text transform="matrix(0.2688 -0.2417 -0.0403 0.4600 701.18 525.10)" y="20">6E</text>
<text transform="matrix(0.2496 -0.2244 -0.0448 0.4486 727.08 501.81)" y="20">6F</text>
<text transform="matrix(0.2323 -0.2089 -0.0486 0.4376 751.16 480.16)" y="20">6G</text>
<text transform="matrix(0.2168 -0.1949 -0.0517 0.4270 773.60 459.98)" y="20">6H</text>
<text transform="matrix(0.3637 -0.3482 -0.0114 0.4828 573.27 688.70)" y="20">7A</text>
<text transform="matrix(0.3341 -0.3198 -0.0200 0.4714 608.13 655.33)" y="20">7B</text>
<text transform="matrix(0.3079 -0.2948 -0.0272 0.4603 640.21 624.63)" y="20">7C</text>
<text transform="matrix(0.2847 -0.2725 -0.0333 0.4494 669.82 596.29)" y="20">7D</text>
<text transform="matrix(0.2640 -0.2528 -0.0385 0.4389 697.24 570.04)" y="20">7E</text>
<text transform="matrix(0.2455 -0.2350 -0.0428 0.4287 722.70 545.66)" y="20">7F</text>
<text transform="matrix(0.2289 -0.2191 -0.0465 0.4188 746.41 522.97)" y="20">7G</text>
<text transform="matrix(0.2139 -0.2048 -0.0496 0.4093 768.54 501.79)" y="20">7H</text>
<text transform="matrix(0.3545 -0.3588 -0.0108 0.4575 572.17 735.70)" y="20">8A</text>
<text transform="matrix(0.3264 -0.3303 -0.0190 0.4477 606.18 701.27)" y="20">8B</text>
<text transform="matrix(0.3014 -0.3050 -0.0259 0.4380 637.55 669.53)" y="20">8C</text>
<text transform="matrix(0.2792 -0.2826 -0.0318 0.4285 666.56 640.17)" y="20">8D</text>
<text transform="matrix(0.2594 -0.2625 -0.0368 0.4192 693.48 612.93)" y="20">8E</text>
<text transform="matrix(0.2416 -0.2445 -0.0410 0.4101 718.52 587.60)" y="20">8F</text>
<text transform="matrix(0.2256 -0.2283 -0.0445 0.4013 741.86 563.97)" y="20">8G</text>
<text transform="matrix(0.2111 -0.2137 -0.0475 0.3927 763.69 541.88)" y="20">8H</text>
</g>
<g stroke="#101010" stroke-width="1.8" opacity="0.4" stroke-linecap="round"><line x1="177.9" y1="211.6" x2="559.8" y2="318.7"/><line x1="177.9" y1="211.6" x2="481.0" y2="131.8"/><line x1="481.0" y1="131.8" x2="817.3" y2="188.0"/><line x1="559.8" y1="318.7" x2="817.3" y2="188.0"/><line x1="177.9" y1="211.6" x2="238.0" y2="593.5"/><line x1="559.8" y1="318.7" x2="553.8" y2="776.8"/><line x1="817.3" y1="188.0" x2="771.7" y2="550.6"/><line x1="238.0" y1="593.5" x2="553.8" y2="776.8"/><line x1="553.8" y1="776.8" x2="771.7" y2="550.6"/></g><g stroke="#46f9ad" stroke-width="1.25" stroke-dasharray="3 0.7"><line x1="177.9" y1="211.6" x2="559.8" y2="318.7"/><line x1="177.9" y1="211.6" x2="481.0" y2="131.8"/><line x1="481.0" y1="131.8" x2="817.3" y2="188.0"/><line x1="559.8" y1="318.7" x2="817.3" y2="188.0"/><line x1="177.9" y1="211.6" x2="238.0" y2="593.5"/><line x1="559.8" y1="318.7" x2="553.8" y2="776.8"/><line x1="817.3" y1="188.0" x2="771.7" y2="550.6"/><line x1="238.0" y1="593.5" x2="553.8" y2="776.8"/><line x1="553.8" y1="776.8" x2="771.7" y2="550.6"/></g>
<defs><filter id="blur" x="-30%" y="-30%" width="160%" height="160%"><feGaussianBlur stdDeviation="3.5"/></filter></defs><polygon points="978.0,118.0 1010.0,136.0 1040.0,114.0 1012.0,104.0" fill="#000" opacity="0.35" filter="url(#blur)"/><polygon points="972.1,76.3 1001.4,63.5 1038.0,73.8 1010.4,87.5" fill="#acacac" opacity="0.82"/><polygon points="972.1,76.3 1010.4,87.5 1010.4,132.3 975.0,117.5" fill="#a6a6a6" opacity="0.82"/><polygon points="1010.4,87.5 1038.0,73.8 1034.8,113.0 1010.4,132.3" fill="#9c9c9c" opacity="0.82"/><path d="M972.1 76.3 L1010.4 87.5 L1038 73.8 M1010.4 87.5 L1010.4 132.3" stroke="#7a7a7a" stroke-width="0.7" fill="none"/><g font-family="Liberation Sans, sans-serif" font-weight="bold" fill="#6c7484" text-anchor="middle"><text font-size="10" transform="matrix(0.66 0.193 0.02 1 991.3 108.6)" letter-spacing="0.5">LEFT</text><text font-size="9.6" transform="matrix(0.62 -0.31 -0.04 1 1024.6 106.8)" letter-spacing="0.3">FRONT</text><text font-size="5.5" transform="matrix(-0.8 0.3 0.9 0.3 1005.5 75.5)">TOP</text></g>
<path d="M29.5 747 V735" stroke="#00ff00" stroke-width="1.2"/><path d="M29.5 747 L37.5 742.2" stroke="#ff0000" stroke-width="1.2"/><path d="M29.5 747.5 L39.6 751.6" stroke="#0000ff" stroke-width="1.2"/><g font-family="Liberation Sans, sans-serif" font-weight="bold" font-size="10"><text x="25.6" y="730.6" fill="#00ff00">y</text><text x="35.6" y="738.6" fill="#ff0000">x</text><text x="38.8" y="748.6" fill="#0000ff">z</text></g>
</svg>
<div class="t" style="left:12.00px;top:6.25px;font-size:11.5px;line-height:15px;color:#d4d4d4;letter-spacing:0.089px;">View</div>
<div class="t" style="left:52.00px;top:6.25px;font-size:11.5px;line-height:15px;color:#d4d4d4;letter-spacing:0.135px;">Shading</div>
<div class="t" style="left:110.00px;top:6.25px;font-size:11.5px;line-height:15px;color:#d4d4d4;letter-spacing:0.462px;">Lighting</div>
<div class="t" style="left:168.00px;top:6.25px;font-size:11.5px;line-height:15px;color:#d4d4d4;letter-spacing:-0.089px;">Show</div>
<div class="t" style="left:212.00px;top:6.25px;font-size:11.5px;line-height:15px;color:#d4d4d4;letter-spacing:-0.132px;">Renderer</div>
<div class="t" style="left:274.00px;top:6.25px;font-size:11.5px;line-height:15px;color:#d4d4d4;letter-spacing:-0.431px;">Panels</div>
<svg class="abs" style="left:0;top:20px" width="1058" height="24" viewBox="0 20 1058 24"><rect x="7" y="24.5" width="1" height="15" fill="#7a7a7a"/><rect x="6" y="26.5" width="3" height="11" rx="1" fill="#8c8c8c"/><rect x="137.9" y="24.5" width="1" height="15" fill="#7a7a7a"/><rect x="136.9" y="26.5" width="3" height="11" rx="1" fill="#8c8c8c"/><rect x="288.9" y="24.5" width="1" height="15" fill="#7a7a7a"/><rect x="287.9" y="26.5" width="3" height="11" rx="1" fill="#8c8c8c"/><rect x="440" y="24.5" width="1" height="15" fill="#7a7a7a"/><rect x="439" y="26.5" width="3" height="11" rx="1" fill="#8c8c8c"/><rect x="531.1" y="24.5" width="1" height="15" fill="#7a7a7a"/><rect x="530.1" y="26.5" width="3" height="11" rx="1" fill="#8c8c8c"/><rect x="562.2" y="24.5" width="1" height="15" fill="#7a7a7a"/><rect x="561.2" y="26.5" width="3" height="11" rx="1" fill="#8c8c8c"/><rect x="632.9" y="24.5" width="1" height="15" fill="#7a7a7a"/><rect x="631.9" y="26.5" width="3" height="11" rx="1" fill="#8c8c8c"/><rect x="17" y="28" width="9.3" height="7.4" rx="0.8" fill="#c6c6c6"/><path d="M26.9 30.4 L31.2 27.2 V36.2 L26.9 33 Z" fill="#c6c6c6"/><rect x="39.2" y="26.6" width="7" height="5.4" fill="#c6c6c6"/><path d="M47.2 29.2 L51.2 26 V34.4 L47.2 31.4 Z" fill="#c6c6c6"/><circle cx="41" cy="34.2" r="4.6" fill="#444"/><circle cx="41" cy="34.2" r="2.6" fill="#444" stroke="#41b4cc" stroke-width="1.4"/><circle cx="41" cy="34.2" r="3.8" fill="none" stroke="#41b4cc" stroke-width="1.3" stroke-dasharray="1.5 1.484"/><path d="M61 26 H67 V37.6 L64 34.2 L61 37.6 Z" fill="#c6c6c6"/><path d="M77 39 L80.5 34.5 H91.5 L88 39 Z" fill="#e6e6e6"/><path d="M83 37.6 H87.5 M84 36 H89.6" stroke="#444" stroke-width="0.9"/><path d="M81 29.6 L86.2 25 V33.6 L81 38 Z" fill="#41b4cc"/><path d="M104.4 25.4 L107.2 29 H101.6 Z M97.6 33.6 L101.2 30.8 V36.4 Z" fill="#c6c6c6"/><path d="M104.4 28.5 V33.6 H100.8" stroke="#c6c6c6" stroke-width="1.5" fill="none"/><circle cx="108.4" cy="33.5" r="2.4" fill="#444" stroke="#41b4cc" stroke-width="1.3"/><path d="M106.6 35.4 L103.6 38.6" stroke="#41b4cc" stroke-width="1.8"/><path d="M120.2 34.2 L127.2 27 L129.8 29.6 L122.8 36.8 Z" fill="#c6c6c6"/><path d="M119.6 34.9 L122.1 37.4 L118.4 38.6 Z" fill="#41b4cc"/><path d="M123.5 38.2 Q128 39.5 130.3 37.4 Q131 36.3 129.6 35.2" fill="none" stroke="#c6c6c6" stroke-width="1"/><rect x="146" y="23" width="19" height="19" rx="2.5" fill="#5285a6"/><rect x="149.3" y="26.1" width="11.3" height="11.5" fill="#e2e2e2" stroke="#3c3530" stroke-width="0.7"/><rect x="151.25" y="28.05" width="1.7" height="1.7" fill="#2c2c2c"/><rect x="151.25" y="31.05" width="1.7" height="1.7" fill="#2c2c2c"/><rect x="151.25" y="34.15" width="1.7" height="1.7" fill="#2c2c2c"/><rect x="154.15" y="28.05" width="1.7" height="1.7" fill="#2c2c2c"/><rect x="154.15" y="31.05" width="1.7" height="1.7" fill="#2c2c2c"/><rect x="154.15" y="34.15" width="1.7" height="1.7" fill="#2c2c2c"/><rect x="157.15" y="28.05" width="1.7" height="1.7" fill="#2c2c2c"/><rect x="157.15" y="31.05" width="1.7" height="1.7" fill="#2c2c2c"/><rect x="157.15" y="34.15" width="1.7" height="1.7" fill="#2c2c2c"/><rect x="167.9" y="26.1" width="14.2" height="11.9" fill="#dcdcdc"/><rect x="169.2" y="29.4" width="11.7" height="5.3" fill="#3a3a3a"/><rect x="169.30" y="27.30" width="2.2" height="0.9" fill="#3a3a3a"/><rect x="169.30" y="36.00" width="2.2" height="0.9" fill="#3a3a3a"/><rect x="172.60" y="27.30" width="2.2" height="0.9" fill="#3a3a3a"/><rect x="172.60" y="36.00" width="2.2" height="0.9" fill="#3a3a3a"/><rect x="175.90" y="27.30" width="2.2" height="0.9" fill="#3a3a3a"/><rect x="175.90" y="36.00" width="2.2" height="0.9" fill="#3a3a3a"/><rect x="179.00" y="27.30" width="2.2" height="0.9" fill="#3a3a3a"/><rect x="179.00" y="36.00" width="2.2" height="0.9" fill="#3a3a3a"/><rect x="188.6" y="26.8" width="13.2" height="10.6" fill="#363636" stroke="#c6c6c6" stroke-width="1.1"/><circle cx="195.2" cy="32" r="3.2" fill="#41b4cc"/><rect x="206.5" y="23.3" width="18" height="18.4" rx="2.5" fill="#4a4a4a" stroke="#2a2a2a" stroke-width="1"/><rect x="209" y="26" width="13" height="11.6" fill="#555"/><circle cx="215.4" cy="32" r="3.6" fill="#3c3c3c"/><rect x="228.6" y="26.8" width="13.2" height="10.6" fill="#363636" stroke="#c6c6c6" stroke-width="1.1"/><path d="M229.5 32 H241" stroke="#41b4cc" stroke-width="2" stroke-dasharray="1.1 0.9"/><path d="M235.2 27.5 V36.8" stroke="#41b4cc" stroke-width="2" stroke-dasharray="1.2 1.2"/><rect x="248.6" y="26.8" width="13.2" height="10.6" fill="#363636" stroke="#c6c6c6" stroke-width="1.1"/><circle cx="257.4" cy="30.6" r="1.9" fill="#41b4cc"/><path d="M251.3 35 L253.2 31.4 L255.2 35 Z" fill="#41b4cc"/><rect x="268.6" y="26.8" width="13.2" height="10.6" fill="#363636" stroke="#c6c6c6" stroke-width="1.1"/><path d="M271.8 29.5 H278.6 V31.2 H276.1 V35 H274.3 V31.2 H271.8 Z" fill="#41b4cc"/><polygon points="306.0,25.2 311.9,28.6 311.9,35.4 306.0,38.8 300.1,35.4 300.1,28.6" fill="none" stroke="#41b4cc" stroke-width="1.2"/><path d="M306.0 32.0 L311.9 28.6 M306.0 32.0 L300.1 28.6 M306.0 32.0 L306.0 38.8" stroke="#41b4cc" stroke-width="1.2"/><rect x="317" y="23" width="19" height="19" rx="2.5" fill="#5285a6"/><polygon points="326.5,24.8 332.9,28.5 326.5,32.2 320.1,28.5" fill="#cccccc"/><polygon points="320.1,28.5 326.5,32.2 326.5,39.6 320.1,35.9" fill="#7a7a7a"/><polygon points="332.9,28.5 332.9,35.9 326.5,39.6 326.5,32.2" fill="#9e9e9e"/><polygon points="326.5,24.6 333.1,28.4 333.1,36.0 326.5,39.8 319.9,36.0 319.9,28.4" fill="none" stroke="#3a3a3a" stroke-width="0.7"/><defs><pattern id="chk" x="1.2" y="0.7" width="5" height="5" patternUnits="userSpaceOnUse"><rect width="5" height="5" fill="#d8d8d8"/><rect width="2.5" height="2.5" fill="#3c3c3c"/><rect x="2.5" y="2.5" width="2.5" height="2.5" fill="#3c3c3c"/></pattern><clipPath id="hs"><circle cx="345.8" cy="32" r="6.5"/></clipPath><clipPath id="ts"><circle cx="386.5" cy="32" r="7"/></clipPath></defs><g clip-path="url(#hs)"><rect x="339" y="25" width="7.2" height="14" fill="#cfcfcf"/><rect x="346.2" y="25" width="7" height="14" fill="url(#chk)"/></g><polygon points="366.0,28.2 369.6,30.3 366.0,32.4 362.4,30.3" fill="#e0e0e0"/><polygon points="362.4,30.3 366.0,32.4 366.0,36.6 362.4,34.5" fill="#9a9a9a"/><polygon points="369.6,30.3 369.6,34.5 366.0,36.6 366.0,32.4" fill="#bdbdbd"/><polygon points="366.0,25.2 371.9,28.6 371.9,35.4 366.0,38.8 360.1,35.4 360.1,28.6" fill="none" stroke="#41b4cc" stroke-width="1.2"/><path d="M366.0 32.0 L371.9 28.6 M366.0 32.0 L360.1 28.6 M366.0 32.0 L366.0 38.8" stroke="#41b4cc" stroke-width="1.2"/><rect x="377" y="23" width="19" height="19" rx="2.5" fill="#5285a6"/><g clip-path="url(#ts)"><rect x="379" y="24.5" width="15" height="15" fill="url(#chk)"/></g><circle cx="386.5" cy="32" r="7" fill="none" stroke="#333" stroke-width="0.8"/><path d="M405.8 26 Q409.6 26 409.6 29.6 Q409.6 31.6 408 33.2 V35.2 H403.6 V33.2 Q402 31.6 402 29.6 Q402 26 405.8 26 Z" fill="#d6d6d6"/><rect x="404" y="36" width="3.6" height="1.4" fill="#bdbdbd"/><rect x="404.6" y="38" width="2.4" height="1" fill="#bdbdbd"/><path d="M405.8 23.4 V24.8 M400.6 25.4 L401.8 26.6 M411 25.4 L409.8 26.6 M399.2 31.2 H400.8 M410.8 31.2 H412.6" stroke="#d6d6d6" stroke-width="1"/><path d="M419 32.6 L424 36.6 M420.6 31.2 L425.4 35" stroke="#a8a8a8" stroke-width="1.1"/><circle cx="428.3" cy="31.3" r="4.8" fill="#41b4cc"/><circle cx="456.8" cy="30.5" r="5" fill="#5c5c5c"/><path d="M451.5 34.5 L456 38 M454 34 L459 38 M457.5 34 L461.5 37" stroke="#4c5a5e" stroke-width="1"/><circle cx="479.5" cy="31.3" r="5" fill="#5c5c5c"/><path d="M474 27.5 Q471.5 31.3 474 35.2 M471.6 28 Q469.4 31.3 471.6 34.8" fill="none" stroke="#555" stroke-width="1"/><circle cx="497" cy="31.6" r="5.2" fill="none" stroke="#555" stroke-width="1.3" stroke-dasharray="1.6 1.4"/><path d="M498.5 26.6 A5.2 5.2 0 0 1 499.5 36.2" fill="none" stroke="#3f5f68" stroke-width="1.5"/><rect x="508.5" y="23.4" width="18" height="18" rx="2.5" fill="#4c4c4c" stroke="#2a2a2a" stroke-width="1"/><rect x="511" y="30" width="8.6" height="8.2" fill="#41575e"/><path d="M516 26 L523.5 33.5 M518.5 26 L523.5 31 M521 26 L523.5 28.5 M516 28.5 L517.5 30 M520.5 33 L523.5 36" stroke="#3a3a3a" stroke-width="1"/><rect x="542.2" y="26.4" width="8" height="7" fill="none" stroke="#41b4cc" stroke-width="1.3" stroke-dasharray="2.2 1.4"/><path d="M549.3 30 L549.3 38.6 L551.4 36.6 L553 39.8 L554.4 39.1 L552.9 36 L555.8 36 Z" fill="#d2d2d2"/><rect x="577.2" y="25.6" width="8.2" height="8.2" fill="#444" stroke="#d6d6d6" stroke-width="1.6"/><rect x="573" y="29.6" width="8.6" height="8.4" fill="#d6d6d6"/><rect x="577.4" y="29.8" width="4" height="4" fill="#9a9a9a"/><path d="M593 30 H597.4 V34.4 H601.6 V38.4 H593 Z" fill="#41b4cc"/><rect x="597.6" y="25.8" width="7.4" height="7.4" fill="#444" stroke="#dcdcdc" stroke-width="1.2"/><rect x="600.4" y="28.6" width="2" height="2" fill="#dcdcdc"/><rect x="613.2" y="26" width="12" height="11.6" fill="#363636" stroke="#dcdcdc" stroke-width="1.2"/><circle cx="616.8" cy="29.4" r="1.7" fill="#41b4cc"/><path d="M617.6 30.4 L622.6 35.4" stroke="#41b4cc" stroke-width="1.8"/></svg>
<div class="t" style="left:18.80px;top:41.69px;font-size:11px;line-height:15px;font-weight:bold;-webkit-text-stroke:0;color:#fff;letter-spacing:0.384px;text-shadow:1px 1px 0 rgba(30,30,30,.75);">Verts:</div>
<div class="t" style="left:127.28px;top:41.69px;font-size:11px;line-height:15px;font-weight:bold;-webkit-text-stroke:0;color:#fff;text-shadow:1px 1px 0 rgba(30,30,30,.75);">8</div>
<div class="t" style="left:192.18px;top:41.69px;font-size:11px;line-height:15px;font-weight:bold;-webkit-text-stroke:0;color:#fff;text-shadow:1px 1px 0 rgba(30,30,30,.75);">8</div>
<div class="t" style="left:257.18px;top:41.69px;font-size:11px;line-height:15px;font-weight:bold;-webkit-text-stroke:0;color:#fff;text-shadow:1px 1px 0 rgba(30,30,30,.75);">0</div>
<div class="t" style="left:18.80px;top:61.69px;font-size:11px;line-height:15px;font-weight:bold;-webkit-text-stroke:0;color:#fff;letter-spacing:0.062px;text-shadow:1px 1px 0 rgba(30,30,30,.75);">Edges:</div>
<div class="t" style="left:121.15px;top:61.69px;font-size:11px;line-height:15px;font-weight:bold;-webkit-text-stroke:0;color:#fff;text-shadow:1px 1px 0 rgba(30,30,30,.75);">12</div>
<div class="t" style="left:186.05px;top:61.69px;font-size:11px;line-height:15px;font-weight:bold;-webkit-text-stroke:0;color:#fff;text-shadow:1px 1px 0 rgba(30,30,30,.75);">12</div>
<div class="t" style="left:257.18px;top:61.69px;font-size:11px;line-height:15px;font-weight:bold;-webkit-text-stroke:0;color:#fff;text-shadow:1px 1px 0 rgba(30,30,30,.75);">0</div>
<div class="t" style="left:18.80px;top:81.69px;font-size:11px;line-height:15px;font-weight:bold;-webkit-text-stroke:0;color:#fff;letter-spacing:-0.035px;text-shadow:1px 1px 0 rgba(30,30,30,.75);">Faces:</div>
<div class="t" style="left:127.28px;top:81.69px;font-size:11px;line-height:15px;font-weight:bold;-webkit-text-stroke:0;color:#fff;text-shadow:1px 1px 0 rgba(30,30,30,.75);">6</div>
<div class="t" style="left:192.18px;top:81.69px;font-size:11px;line-height:15px;font-weight:bold;-webkit-text-stroke:0;color:#fff;text-shadow:1px 1px 0 rgba(30,30,30,.75);">6</div>
<div class="t" style="left:257.18px;top:81.69px;font-size:11px;line-height:15px;font-weight:bold;-webkit-text-stroke:0;color:#fff;text-shadow:1px 1px 0 rgba(30,30,30,.75);">0</div>
<div class="t" style="left:18.80px;top:101.69px;font-size:11px;line-height:15px;font-weight:bold;-webkit-text-stroke:0;color:#fff;letter-spacing:0.016px;text-shadow:1px 1px 0 rgba(30,30,30,.75);">Tris:</div>
<div class="t" style="left:121.15px;top:101.69px;font-size:11px;line-height:15px;font-weight:bold;-webkit-text-stroke:0;color:#fff;text-shadow:1px 1px 0 rgba(30,30,30,.75);">12</div>
<div class="t" style="left:186.05px;top:101.69px;font-size:11px;line-height:15px;font-weight:bold;-webkit-text-stroke:0;color:#fff;text-shadow:1px 1px 0 rgba(30,30,30,.75);">12</div>
<div class="t" style="left:257.18px;top:101.69px;font-size:11px;line-height:15px;font-weight:bold;-webkit-text-stroke:0;color:#fff;text-shadow:1px 1px 0 rgba(30,30,30,.75);">0</div>
<div class="t" style="left:18.80px;top:121.69px;font-size:11px;line-height:15px;font-weight:bold;-webkit-text-stroke:0;color:#fff;letter-spacing:-0.087px;text-shadow:1px 1px 0 rgba(30,30,30,.75);">UVs:</div>
<div class="t" style="left:121.15px;top:121.69px;font-size:11px;line-height:15px;font-weight:bold;-webkit-text-stroke:0;color:#fff;text-shadow:1px 1px 0 rgba(30,30,30,.75);">24</div>
<div class="t" style="left:186.05px;top:121.69px;font-size:11px;line-height:15px;font-weight:bold;-webkit-text-stroke:0;color:#fff;text-shadow:1px 1px 0 rgba(30,30,30,.75);">24</div>
<div class="t" style="left:257.18px;top:121.69px;font-size:11px;line-height:15px;font-weight:bold;-webkit-text-stroke:0;color:#fff;text-shadow:1px 1px 0 rgba(30,30,30,.75);">0</div>
<div class="t" style="left:510.00px;top:752.19px;font-size:11px;line-height:15px;font-weight:bold;-webkit-text-stroke:0;color:#fff;letter-spacing:0.508px;text-shadow:1px 1px 0 rgba(30,30,30,.75);">persp</div>
<svg class="abs" style="left:1062px;top:0" width="430" height="22"><defs><pattern id="dots" x="1070" y="10" width="3" height="3" patternUnits="userSpaceOnUse"><rect x="0" y="0" width="1" height="1" fill="#8a8a8a"/></pattern></defs><g transform="translate(-1062 0)"><rect x="1070" y="10" width="154" height="4" fill="url(#dots)"/><rect x="1310" y="10" width="151" height="4" fill="url(#dots)"/><rect x="1466.5" y="5.5" width="11" height="12" rx="2.5" fill="#555" stroke="#2a2a2a"/><rect x="1471.5" y="8" width="4" height="3.5" fill="none" stroke="#ddd" stroke-width="1.2"/><rect x="1468.6" y="11.2" width="3.6" height="3.6" fill="#555" stroke="#ddd" stroke-width="1.2"/><rect x="1481.5" y="5.5" width="14" height="12" rx="2.5" fill="#555" stroke="#2a2a2a"/><path d="M1485 8 L1491 15 M1491 8 L1485 15" stroke="#e0e0e0" stroke-width="1.8"/></g></svg>
<div class="t" style="left:1236.50px;top:6.96px;font-size:9px;line-height:13px;color:#d0d0d0;letter-spacing:-0.007px;">Attribute Editor</div>
<div class="t" style="left:1075.50px;top:27.65px;font-size:11.5px;line-height:15px;color:#d4d4d4;letter-spacing:-0.397px;">List</div>
<div class="t" style="left:1107.60px;top:27.65px;font-size:11.5px;line-height:15px;color:#d4d4d4;letter-spacing:-0.348px;">Selected</div>
<div class="t" style="left:1165.40px;top:27.65px;font-size:11.5px;line-height:15px;color:#d4d4d4;letter-spacing:-0.503px;">Focus</div>
<div class="t" style="left:1210.20px;top:27.65px;font-size:11.5px;line-height:15px;color:#d4d4d4;letter-spacing:0.217px;">Attributes</div>
<div class="t" style="left:1276.40px;top:27.65px;font-size:11.5px;line-height:15px;color:#d4d4d4;letter-spacing:-0.089px;">Show</div>
<div class="t" style="left:1320.40px;top:27.65px;font-size:11.5px;line-height:15px;color:#d4d4d4;letter-spacing:-0.185px;">Help</div>
<div class="abs " style="left:1072px;top:60px;width:64px;height:21px;background:#373737;border-radius:3px 3px 0 0"></div>
<div class="abs " style="left:1137px;top:60px;width:95px;height:21px;background:#373737;border-radius:3px 3px 0 0"></div>
<div class="abs " style="left:1233px;top:60px;width:79px;height:21px;background:#656565;border-radius:3px 3px 0 0"></div>
<div class="abs " style="left:1072px;top:81px;width:417px;height:1px;background:#2b2b2b;"></div>
<div class="t" style="left:1084.50px;top:64.65px;font-size:11.5px;line-height:15px;color:#bdbdbd;letter-spacing:-0.293px;">pCube1</div>
<div class="t" style="left:1148.50px;top:64.65px;font-size:11.5px;line-height:15px;color:#bdbdbd;letter-spacing:-0.250px;">pCubeShape1</div>
<div class="t" style="left:1244.60px;top:64.65px;font-size:11.5px;line-height:15px;color:#efefef;letter-spacing:0.009px;">MyMaterial</div>
<div class="t" style="left:1157.50px;top:116.19px;font-size:11px;line-height:15px;color:#c8c8c8;letter-spacing:-0.025px;">cgfxShader:</div>
<div class="abs " style="left:1223px;top:112.5px;width:154px;height:21px;background:#2b2b2b;border-radius:2px"></div>
<div class="t" style="left:1228.00px;top:116.69px;font-size:11px;line-height:15px;color:#dcdcdc;letter-spacing:0.247px;">MyMaterial</div>
<svg class="abs" style="left:1386px;top:100px" width="26" height="44"><g transform="translate(-1386 -100)" fill="none" stroke="#c4c4c4" stroke-width="1.3"><path d="M1395 105.5 H1405.5 V116.5 H1392.5 V114"/><path d="M1390 107.5 L1396 111 L1390 114.5 Z" fill="#c4c4c4" stroke="none"/><path d="M1403.5 130 V127.5 H1390.5 V138.5 H1403.5 V136.5"/><path d="M1401.5 129.5 L1407.5 133 L1401.5 136.5 Z" fill="#c4c4c4" stroke="none"/></g></svg>
<div class="abs " style="left:1418px;top:91px;width:70px;height:20px;background:#5d5d5d;box-shadow:inset 0 0 0 1px #646464;border-radius:1px"></div>
<div class="abs " style="left:1418px;top:113px;width:70px;height:20px;background:#5d5d5d;box-shadow:inset 0 0 0 1px #646464;border-radius:1px"></div>
<div class="abs " style="left:1418px;top:135px;width:35px;height:20px;background:#4c4c4c;border-radius:1px"></div>
<div class="abs " style="left:1455px;top:135px;width:35px;height:20px;background:#5d5d5d;box-shadow:inset 0 0 0 1px #646464;border-radius:1px"></div>
<div class="t" style="left:1438.10px;top:94.05px;font-size:11.5px;line-height:15px;color:#eeeeee;letter-spacing:-0.328px;">Focus</div>
<div class="t" style="left:1435.00px;top:115.95px;font-size:11.5px;line-height:15px;color:#eeeeee;letter-spacing:-0.495px;">Presets</div>
<div class="t" style="left:1421.55px;top:138.05px;font-size:11.5px;line-height:15px;color:#7c7c7c;letter-spacing:-0.089px;">Show</div>
<div class="t" style="left:1460.25px;top:138.05px;font-size:11.5px;line-height:15px;color:#eeeeee;letter-spacing:-0.052px;">Hide</div>
<div class="t" style="left:1184.00px;top:193.69px;font-size:11px;line-height:15px;color:#c8c8c8;letter-spacing:-0.163px;">Sample</div>
<svg class="abs" style="left:1226px;top:169px" width="64" height="64" viewBox="0 0 64 64"><rect width="64" height="64" fill="#76829f"/><defs><clipPath id="sph"><circle cx="32" cy="32" r="26"/></clipPath><radialGradient id="shade" cx="0.45" cy="0.45" r="0.6"><stop offset="0.7" stop-color="#000" stop-opacity="0"/><stop offset="1" stop-color="#000" stop-opacity="0.22"/></radialGradient></defs><g clip-path="url(#sph)"><polygon points="13.5,5.4 15.2,5.2 16.9,4.9 18.6,4.7 20.4,4.6 22.1,4.4 23.8,4.3 23.8,4.3 23.4,5.5 23.0,6.7 22.6,7.9 22.2,9.1 21.8,10.3 21.5,11.5 21.5,11.5 19.3,11.7 17.1,11.9 14.9,12.1 12.7,12.3 10.5,12.6 8.3,12.9 8.3,12.9 9.1,11.7 9.9,10.5 10.7,9.2 11.6,8.0 12.5,6.7 13.5,5.4" fill="#0000ff" stroke="#6a6a6a" stroke-width="0.35"/><polygon points="23.8,4.3 26.1,4.1 28.5,4.1 30.8,4.0 33.1,4.0 35.5,4.0 37.8,4.1 37.8,4.1 38.1,5.3 38.4,6.6 38.7,7.8 38.9,9.0 39.2,10.2 39.4,11.4 39.4,11.4 36.4,11.3 33.4,11.2 30.5,11.2 27.5,11.3 24.5,11.4 21.5,11.5 21.5,11.5 21.8,10.3 22.2,9.1 22.6,7.9 23.0,6.7 23.4,5.5 23.8,4.3" fill="#ff00ff" stroke="#6a6a6a" stroke-width="0.35"/><polygon points="37.8,4.1 39.9,4.3 42.0,4.4 44.2,4.6 46.3,4.8 48.4,5.1 50.5,5.4 50.5,5.4 51.5,6.7 52.4,8.0 53.3,9.2 54.1,10.5 54.9,11.7 55.7,12.9 55.7,12.9 53.0,12.6 50.2,12.2 47.5,11.9 44.8,11.7 42.1,11.5 39.4,11.4 39.4,11.4 39.2,10.2 38.9,9.0 38.7,7.8 38.4,6.6 38.1,5.3 37.8,4.1" fill="#bcbcbc" stroke="#6a6a6a" stroke-width="0.35"/><polygon points="8.3,12.9 10.5,12.6 12.7,12.3 14.9,12.1 17.1,11.9 19.3,11.7 21.5,11.5 21.5,11.5 21.1,13.1 20.7,14.7 20.4,16.3 20.1,17.8 19.8,19.4 19.5,21.0 19.5,21.0 16.9,21.1 14.3,21.2 11.7,21.4 9.1,21.6 6.5,21.8 3.9,22.0 3.9,22.0 4.4,20.6 5.1,19.1 5.8,17.6 6.6,16.1 7.4,14.5 8.3,12.9" fill="#ff00ff" stroke="#6a6a6a" stroke-width="0.35"/><polygon points="21.5,11.5 24.5,11.4 27.5,11.3 30.5,11.2 33.4,11.2 36.4,11.3 39.4,11.4 39.4,11.4 39.7,13.0 40.0,14.5 40.2,16.1 40.4,17.7 40.6,19.3 40.8,20.8 40.8,20.8 37.3,20.7 33.7,20.7 30.2,20.7 26.6,20.7 23.1,20.8 19.5,21.0 19.5,21.0 19.8,19.4 20.1,17.8 20.4,16.3 20.7,14.7 21.1,13.1 21.5,11.5" fill="#bcbcbc" stroke="#6a6a6a" stroke-width="0.35"/><polygon points="39.4,11.4 42.1,11.5 44.8,11.7 47.5,11.9 50.2,12.2 53.0,12.6 55.7,12.9 55.7,12.9 56.6,14.5 57.4,16.1 58.2,17.6 58.9,19.1 59.6,20.6 60.1,22.0 60.1,22.0 56.9,21.7 53.7,21.5 50.5,21.3 47.3,21.1 44.0,20.9 40.8,20.8 40.8,20.8 40.6,19.3 40.4,17.7 40.2,16.1 40.0,14.5 39.7,13.0 39.4,11.4" fill="#ffffff" stroke="#6a6a6a" stroke-width="0.35"/><polygon points="3.9,22.0 6.5,21.8 9.1,21.6 11.7,21.4 14.3,21.2 16.9,21.1 19.5,21.0 19.5,21.0 19.3,22.8 19.1,24.7 18.9,26.5 18.8,28.4 18.7,30.2 18.7,32.1 18.7,32.1 15.9,32.1 13.1,32.1 10.4,32.1 7.6,32.1 4.8,32.1 2.0,32.1 2.0,32.1 2.0,30.4 2.2,28.8 2.5,27.1 2.8,25.4 3.3,23.7 3.9,22.0" fill="#bcbcbc" stroke="#6a6a6a" stroke-width="0.35"/><polygon points="19.5,21.0 23.1,20.8 26.6,20.7 30.2,20.7 33.7,20.7 37.3,20.7 40.8,20.8 40.8,20.8 41.0,22.7 41.1,24.6 41.3,26.5 41.3,28.3 41.4,30.2 41.4,32.1 41.4,32.1 37.6,32.1 33.8,32.1 30.1,32.1 26.3,32.1 22.5,32.1 18.7,32.1 18.7,32.1 18.7,30.2 18.8,28.4 18.9,26.5 19.1,24.7 19.3,22.8 19.5,21.0" fill="#ffffff" stroke="#6a6a6a" stroke-width="0.35"/><polygon points="40.8,20.8 44.0,20.9 47.3,21.1 50.5,21.3 53.7,21.5 56.9,21.7 60.1,22.0 60.1,22.0 60.7,23.7 61.2,25.4 61.5,27.1 61.8,28.8 62.0,30.4 62.0,32.1 62.0,32.1 58.6,32.1 55.1,32.1 51.7,32.1 48.3,32.1 44.8,32.1 41.4,32.1 41.4,32.1 41.4,30.2 41.3,28.3 41.3,26.5 41.1,24.6 41.0,22.7 40.8,20.8" fill="#ff0000" stroke="#6a6a6a" stroke-width="0.35"/><polygon points="2.0,32.1 4.8,32.1 7.6,32.1 10.4,32.1 13.1,32.1 15.9,32.1 18.7,32.1 18.7,32.1 18.7,34.0 18.8,35.8 18.9,37.7 19.1,39.6 19.3,41.5 19.6,43.3 19.6,43.3 17.0,43.2 14.4,43.1 11.8,42.9 9.2,42.7 6.6,42.5 4.0,42.3 4.0,42.3 3.4,40.5 2.9,38.8 2.5,37.1 2.2,35.4 2.1,33.7 2.0,32.1" fill="#ffffff" stroke="#6a6a6a" stroke-width="0.35"/><polygon points="18.7,32.1 22.5,32.1 26.3,32.1 30.1,32.1 33.8,32.1 37.6,32.1 41.4,32.1 41.4,32.1 41.4,34.0 41.3,35.9 41.2,37.8 41.1,39.7 41.0,41.6 40.8,43.5 40.8,43.5 37.2,43.6 33.7,43.6 30.2,43.6 26.6,43.6 23.1,43.5 19.6,43.3 19.6,43.3 19.3,41.5 19.1,39.6 18.9,37.7 18.8,35.8 18.7,34.0 18.7,32.1" fill="#ff0000" stroke="#6a6a6a" stroke-width="0.35"/><polygon points="41.4,32.1 44.8,32.1 48.3,32.1 51.7,32.1 55.1,32.1 58.6,32.1 62.0,32.1 62.0,32.1 61.9,33.7 61.8,35.4 61.5,37.1 61.1,38.8 60.6,40.5 60.0,42.3 60.0,42.3 56.8,42.5 53.6,42.8 50.4,43.0 47.2,43.2 44.0,43.4 40.8,43.5 40.8,43.5 41.0,41.6 41.1,39.7 41.2,37.8 41.3,35.9 41.4,34.0 41.4,32.1" fill="#ffff00" stroke="#6a6a6a" stroke-width="0.35"/><polygon points="4.0,42.3 6.6,42.5 9.2,42.7 11.8,42.9 14.4,43.1 17.0,43.2 19.6,43.3 19.6,43.3 19.8,44.9 20.1,46.5 20.4,48.0 20.8,49.6 21.2,51.2 21.6,52.8 21.6,52.8 19.4,52.6 17.2,52.4 15.1,52.2 12.9,52.0 10.7,51.7 8.5,51.4 8.5,51.4 7.6,49.8 6.7,48.2 5.9,46.7 5.2,45.2 4.5,43.7 4.0,42.3" fill="#ff0000" stroke="#6a6a6a" stroke-width="0.35"/><polygon points="19.6,43.3 23.1,43.5 26.6,43.6 30.2,43.6 33.7,43.6 37.2,43.6 40.8,43.5 40.8,43.5 40.6,45.0 40.4,46.6 40.2,48.2 39.9,49.8 39.7,51.3 39.4,52.9 39.4,52.9 36.4,53.0 33.4,53.1 30.5,53.1 27.5,53.0 24.6,52.9 21.6,52.8 21.6,52.8 21.2,51.2 20.8,49.6 20.4,48.0 20.1,46.5 19.8,44.9 19.6,43.3" fill="#ffff00" stroke="#6a6a6a" stroke-width="0.35"/><polygon points="40.8,43.5 44.0,43.4 47.2,43.2 50.4,43.0 53.6,42.8 56.8,42.5 60.0,42.3 60.0,42.3 59.5,43.7 58.8,45.2 58.1,46.7 57.3,48.2 56.4,49.8 55.5,51.4 55.5,51.4 52.8,51.8 50.1,52.1 47.4,52.4 44.7,52.6 42.0,52.8 39.4,52.9 39.4,52.9 39.7,51.3 39.9,49.8 40.2,48.2 40.4,46.6 40.6,45.0 40.8,43.5" fill="#00ff00" stroke="#6a6a6a" stroke-width="0.35"/><polygon points="8.5,51.4 10.7,51.7 12.9,52.0 15.1,52.2 17.2,52.4 19.4,52.6 21.6,52.8 21.6,52.8 21.9,53.9 22.3,55.1 22.6,56.2 23.0,57.4 23.4,58.6 23.8,59.7 23.8,59.7 22.1,59.6 20.4,59.4 18.6,59.3 16.9,59.1 15.2,58.8 13.5,58.6 13.5,58.6 12.6,57.3 11.7,56.1 10.8,54.9 10.0,53.7 9.3,52.5 8.5,51.4" fill="#ffff00" stroke="#6a6a6a" stroke-width="0.35"/><polygon points="21.6,52.8 24.6,52.9 27.5,53.0 30.5,53.1 33.4,53.1 36.4,53.0 39.4,52.9 39.4,52.9 39.1,54.1 38.9,55.2 38.6,56.4 38.4,57.5 38.1,58.7 37.8,59.9 37.8,59.9 35.5,60.0 33.1,60.0 30.8,60.0 28.5,59.9 26.1,59.9 23.8,59.7 23.8,59.7 23.4,58.6 23.0,57.4 22.6,56.2 22.3,55.1 21.9,53.9 21.6,52.8" fill="#00ff00" stroke="#6a6a6a" stroke-width="0.35"/><polygon points="39.4,52.9 42.0,52.8 44.7,52.6 47.4,52.4 50.1,52.1 52.8,51.8 55.5,51.4 55.5,51.4 54.7,52.5 54.0,53.7 53.2,54.9 52.3,56.1 51.4,57.3 50.5,58.6 50.5,58.6 48.4,58.9 46.3,59.2 44.2,59.4 42.0,59.6 39.9,59.7 37.8,59.9 37.8,59.9 38.1,58.7 38.4,57.5 38.6,56.4 38.9,55.2 39.1,54.1 39.4,52.9" fill="#00ffff" stroke="#6a6a6a" stroke-width="0.35"/><g font-family="Liberation Sans, sans-serif" fill="#666" text-anchor="middle" opacity="0.6"><text x="29.6" y="18.2" font-size="6" textLength="10" lengthAdjust="spacingAndGlyphs" fill="#555">3F</text><text x="30" y="29" font-size="6.4" textLength="11.5" lengthAdjust="spacingAndGlyphs" fill="#666">4F</text><text x="30" y="40.6" font-size="6.4" textLength="11.5" lengthAdjust="spacingAndGlyphs" fill="#7a0000">5F</text><text x="29.8" y="50.6" font-size="6" textLength="10.5" lengthAdjust="spacingAndGlyphs" fill="#777700">6F</text><text x="30" y="57.4" font-size="3.6" textLength="7" lengthAdjust="spacingAndGlyphs" fill="#007700">7F</text><text x="50.5" y="29" font-size="5.8" textLength="9" lengthAdjust="spacingAndGlyphs" fill="#7a0000">4G</text><text x="50.5" y="40.6" font-size="5.8" textLength="9" lengthAdjust="spacingAndGlyphs" fill="#777700">5G</text><text x="48.6" y="50" font-size="5" textLength="8" lengthAdjust="spacingAndGlyphs" fill="#007700">6G</text><text x="48" y="18" font-size="5" textLength="8.5" lengthAdjust="spacingAndGlyphs" fill="#aaa">3G</text><text x="11.8" y="29" font-size="5" textLength="6.5" lengthAdjust="spacingAndGlyphs" fill="#888">4E</text><text x="12.2" y="40.6" font-size="5" textLength="6.5" lengthAdjust="spacingAndGlyphs" fill="#999">5E</text><text x="15.5" y="50" font-size="4.5" textLength="5.5" lengthAdjust="spacingAndGlyphs" fill="#900">6E</text></g><circle cx="32" cy="32" r="26" fill="url(#shade)"/></g></svg>
<div class="abs" style="left:1062px;top:240px;width:430px;height:452px;overflow:hidden"><div class="abs" style="left:-1062px;top:-240px;width:1492px;height:778px">
<div class="abs " style="left:1077px;top:245px;width:397px;height:20px;background:#5d5d5d;border-radius:2px"></div><svg class="abs" style="left:1083px;top:250px" width="14" height="9"><path d="M1 1 L12 1 L6.5 7.4 Z" fill="#ececec"/></svg><div class="t" style="left:1110.00px;top:247.89px;font-size:11px;line-height:15px;font-weight:bold;-webkit-text-stroke:0;color:#c8c8c8;letter-spacing:-0.309px;">CgFX Shader</div>
<div class="abs " style="left:1079px;top:265px;width:395px;height:113px;background:#494949;"></div>
<div class="t" style="left:1177.20px;top:275.69px;font-size:11px;line-height:15px;color:#c8c8c8;letter-spacing:-0.301px;">CgFX File</div>
<div class="abs " style="left:1232px;top:273.7px;width:208px;height:18.1px;background:#2b2b2b;border-radius:2px"></div>
<div class="t" style="left:1236.00px;top:276.69px;font-size:11px;line-height:15px;color:#dcdcdc;letter-spacing:0.033px;">eExample\SimplygonMayaPBRShader.fx</div>
<svg class="abs" style="left:1443px;top:275px" width="20" height="16"><defs><linearGradient id="fg" x1="0" y1="0" x2="0" y2="1"><stop offset="0" stop-color="#f4dc78"/><stop offset="1" stop-color="#c9a236"/></linearGradient></defs><path d="M1.5 3 Q1.5 1.8 2.7 1.8 H6.5 L8 3.6 H16.5 Q17.7 3.6 17.7 4.8 V13 Q17.7 14.3 16.5 14.3 H2.7 Q1.5 14.3 1.5 13 Z" fill="url(#fg)" stroke="#8f7424" stroke-width="0.8"/></svg>
<div class="abs " style="left:1231px;top:298px;width:70px;height:26px;background:#5d5d5d;box-shadow:inset 0 0 0 1px #646464;border-radius:1px"></div>
<div class="t" style="left:1255.25px;top:304.15px;font-size:11.5px;line-height:15px;color:#eeeeee;letter-spacing:0.562px;">Edit</div>
<div class="abs " style="left:1303px;top:298px;width:70px;height:26px;background:#5d5d5d;box-shadow:inset 0 0 0 1px #646464;border-radius:1px"></div>
<div class="t" style="left:1320.00px;top:304.15px;font-size:11.5px;line-height:15px;color:#eeeeee;letter-spacing:-0.087px;">Reload</div>
<div class="abs " style="left:1375px;top:298px;width:70px;height:26px;background:#5d5d5d;box-shadow:inset 0 0 0 1px #646464;border-radius:1px"></div>
<div class="t" style="left:1396.00px;top:304.15px;font-size:11.5px;line-height:15px;color:#eeeeee;letter-spacing:-0.036px;">Open</div>
<svg class="abs" style="left:1451px;top:302px" width="18" height="18"><circle cx="9" cy="9" r="8" fill="#5c5c5c"/><rect x="8" y="7.5" width="2.4" height="6" fill="#444"/><rect x="7" y="7.5" width="2" height="1.2" fill="#444"/><rect x="7" y="12.5" width="4.4" height="1.2" fill="#444"/><circle cx="9.2" cy="4.8" r="1.4" fill="#444"/></svg>
<div class="abs " style="left:1232px;top:327.3px;width:236px;height:17.2px;background:#3f3f3f;border-radius:2px"></div>
<div class="abs " style="left:1083px;top:347px;width:391px;height:1px;background:#404040;"></div>
<div class="abs " style="left:1083px;top:348px;width:391px;height:1px;background:#535353;"></div>
<div class="t" style="left:1173.00px;top:352.69px;font-size:11px;line-height:15px;color:#c8c8c8;letter-spacing:0.164px;">Technique</div>
<svg class="abs" style="left:1232px;top:354px" width="12" height="12"><circle cx="6.5" cy="6.5" r="4.9" fill="#2b2b2b"/><circle cx="6.5" cy="6.5" r="3.7" fill="#cfcfcf"/></svg>
<div class="t" style="left:1251.00px;top:352.69px;font-size:11px;line-height:15px;color:#c8c8c8;letter-spacing:-1.312px;">PBR</div>
<div class="abs " style="left:1083px;top:371px;width:391px;height:1px;background:#404040;"></div>
<div class="abs " style="left:1083px;top:372px;width:391px;height:1px;background:#535353;"></div>
<div class="abs " style="left:1083px;top:375px;width:391px;height:1px;background:#404040;"></div>
<div class="abs " style="left:1083px;top:376px;width:391px;height:1px;background:#535353;"></div>
<div class="abs " style="left:1077px;top:381px;width:397px;height:20px;background:#5d5d5d;border-radius:2px"></div><svg class="abs" style="left:1083px;top:386px" width="14" height="9"><path d="M1 1 L12 1 L6.5 7.4 Z" fill="#ececec"/></svg><div class="t" style="left:1110.00px;top:383.89px;font-size:11px;line-height:15px;font-weight:bold;-webkit-text-stroke:0;color:#c8c8c8;letter-spacing:-0.136px;">SimplygonMayaPBRShader Parameters</div>
<div class="abs " style="left:1079px;top:401px;width:395px;height:226px;background:#494949;"></div>
<div class="t" style="left:1177.64px;top:408.69px;font-size:11px;line-height:15px;color:#c8c8c8;">g_UTiling</div>
<div class="abs " style="left:1232px;top:407.3px;width:68px;height:17.4px;background:#2b2b2b;border-radius:2px"></div>
<div class="t" style="left:1237.00px;top:409.89px;font-size:11px;line-height:15px;color:#dcdcdc;">1.000</div>
<div class="t" style="left:1178.23px;top:430.69px;font-size:11px;line-height:15px;color:#c8c8c8;">g_VTiling</div>
<div class="abs " style="left:1232px;top:429.3px;width:68px;height:17.4px;background:#2b2b2b;border-radius:2px"></div>
<div class="t" style="left:1237.00px;top:431.89px;font-size:11px;line-height:15px;color:#dcdcdc;">1.000</div>
<div class="t" style="left:1174.34px;top:452.69px;font-size:11px;line-height:15px;color:#c8c8c8;">g_UOffset</div>
<div class="abs " style="left:1232px;top:451.3px;width:68px;height:17.4px;background:#2b2b2b;border-radius:2px"></div>
<div class="t" style="left:1237.00px;top:453.89px;font-size:11px;line-height:15px;color:#dcdcdc;">0.000</div>
<div class="t" style="left:1174.93px;top:474.69px;font-size:11px;line-height:15px;color:#c8c8c8;">g_VOffset</div>
<div class="abs " style="left:1232px;top:473.3px;width:68px;height:17.4px;background:#2b2b2b;border-radius:2px"></div>
<div class="t" style="left:1237.00px;top:475.89px;font-size:11px;line-height:15px;color:#dcdcdc;">0.000</div>
<div class="t" style="left:1134.70px;top:497.29px;font-size:11px;line-height:15px;color:#c8c8c8;letter-spacing:0.047px;">CubemapSampler</div>
<div class="abs " style="left:1232px;top:495.1px;width:208px;height:17.6px;background:#2b2b2b;border-radius:2px"></div>
<div class="t" style="left:1237.00px;top:498.29px;font-size:11px;line-height:15px;color:#dcdcdc;">file2</div>
<svg class="abs" style="left:1446px;top:495.8px" width="20" height="16"><path d="M6.5 2 H16.3 V13.5 H6.5 V11.5 M6.5 4 V2" fill="none" stroke="#000" stroke-width="1.2"/><path d="M2 4 L9.5 7.7 L2 11.4 Z" fill="#000"/></svg>
<div class="t" style="left:1146.60px;top:519.29px;font-size:11px;line-height:15px;color:#c8c8c8;letter-spacing:0.183px;">DiffuseSampler</div>
<div class="abs " style="left:1232px;top:517.1px;width:208px;height:17.6px;background:#2b2b2b;border-radius:2px"></div>
<div class="t" style="left:1237.00px;top:520.29px;font-size:11px;line-height:15px;color:#dcdcdc;">file1</div>
<svg class="abs" style="left:1446px;top:517.8px" width="20" height="16"><path d="M6.5 2 H16.3 V13.5 H6.5 V11.5 M6.5 4 V2" fill="none" stroke="#000" stroke-width="1.2"/><path d="M2 4 L9.5 7.7 L2 11.4 Z" fill="#000"/></svg>
<div class="t" style="left:1139.50px;top:541.29px;font-size:11px;line-height:15px;color:#c8c8c8;letter-spacing:0.007px;">SpecularSampler</div>
<div class="abs " style="left:1232px;top:539.1px;width:208px;height:17.6px;background:#2b2b2b;border-radius:2px"></div>
<div class="t" style="left:1237.00px;top:542.29px;font-size:11px;line-height:15px;color:#dcdcdc;">file3</div>
<svg class="abs" style="left:1446px;top:539.8px" width="20" height="16"><path d="M6.5 2 H16.3 V13.5 H6.5 V11.5 M6.5 4 V2" fill="none" stroke="#000" stroke-width="1.2"/><path d="M2 4 L9.5 7.7 L2 11.4 Z" fill="#000"/></svg>
<div class="t" style="left:1125.50px;top:563.29px;font-size:11px;line-height:15px;color:#c8c8c8;letter-spacing:0.123px;">RoughnessSampler</div>
<div class="abs " style="left:1232px;top:561.1px;width:208px;height:17.6px;background:#2b2b2b;border-radius:2px"></div>
<div class="t" style="left:1237.00px;top:564.29px;font-size:11px;line-height:15px;color:#dcdcdc;">file4</div>
<svg class="abs" style="left:1446px;top:561.8px" width="20" height="16"><path d="M6.5 2 H16.3 V13.5 H6.5 V11.5 M6.5 4 V2" fill="none" stroke="#000" stroke-width="1.2"/><path d="M2 4 L9.5 7.7 L2 11.4 Z" fill="#000"/></svg>
<div class="t" style="left:1131.60px;top:585.29px;font-size:11px;line-height:15px;color:#c8c8c8;letter-spacing:0.085px;">MetalnessSampler</div>
<div class="abs " style="left:1232px;top:583.1px;width:208px;height:17.6px;background:#2b2b2b;border-radius:2px"></div>
<div class="t" style="left:1237.00px;top:586.29px;font-size:11px;line-height:15px;color:#dcdcdc;">file5</div>
<svg class="abs" style="left:1446px;top:583.8px" width="20" height="16"><path d="M6.5 2 H16.3 V13.5 H6.5 V11.5 M6.5 4 V2" fill="none" stroke="#000" stroke-width="1.2"/><path d="M2 4 L9.5 7.7 L2 11.4 Z" fill="#000"/></svg>
<div class="t" style="left:1141.60px;top:607.29px;font-size:11px;line-height:15px;color:#c8c8c8;letter-spacing:0.038px;">NormalsSampler</div>
<div class="abs " style="left:1232px;top:605.1px;width:208px;height:17.6px;background:#2b2b2b;border-radius:2px"></div>
<div class="t" style="left:1237.00px;top:608.29px;font-size:11px;line-height:15px;color:#dcdcdc;">file6</div>
<svg class="abs" style="left:1446px;top:605.8px" width="20" height="16"><path d="M6.5 2 H16.3 V13.5 H6.5 V11.5 M6.5 4 V2" fill="none" stroke="#000" stroke-width="1.2"/><path d="M2 4 L9.5 7.7 L2 11.4 Z" fill="#000"/></svg>
<div class="abs " style="left:1077px;top:629.3px;width:397px;height:20px;background:#5d5d5d;border-radius:2px"></div><svg class="abs" style="left:1083px;top:634.3px" width="14" height="9"><path d="M1 1 L12 1 L6.5 7.4 Z" fill="#ececec"/></svg><div class="t" style="left:1110.00px;top:632.19px;font-size:11px;line-height:15px;font-weight:bold;-webkit-text-stroke:0;color:#c8c8c8;">Vertex Data</div>
<div class="abs " style="left:1079px;top:649px;width:395px;height:51px;background:#494949;"></div>
<div class="t" style="left:1183.20px;top:657.69px;font-size:11px;line-height:15px;color:#c8c8c8;letter-spacing:0.335px;">Position</div>
<div class="abs " style="left:1233px;top:656px;width:234px;height:17.5px;background:#2b2b2b;border-radius:2px"></div>
<div class="t" style="left:1238.00px;top:657.99px;font-size:11px;line-height:15px;color:#dcdcdc;letter-spacing:0.580px;">position</div>
<div class="t" style="left:1209.42px;top:679.99px;font-size:11px;line-height:15px;color:#c8c8c8;">UV</div>
<div class="abs " style="left:1233px;top:678px;width:234px;height:22px;background:#2b2b2b;border-radius:2px"></div>
<div class="t" style="left:1238.00px;top:680.49px;font-size:11px;line-height:15px;color:#dcdcdc;letter-spacing:0.047px;">uv:map1</div>
</div></div>
<div class="abs " style="left:1474.3px;top:240px;width:11.2px;height:451px;background:#383838;"></div>
<div class="abs " style="left:1475.3px;top:252.5px;width:9.4px;height:320px;background:#606060;border-radius:4px"></div>
<svg class="abs" style="left:1474px;top:242px" width="12" height="8"><path d="M1.5 6.5 L6 1.5 L10.5 6.5 Z" fill="#d0d0d0"/></svg>
<svg class="abs" style="left:1474px;top:680px" width="12" height="8"><path d="M1.2 1.6 L5.6 7 L10 1.6 Z" fill="#c4c4c4"/></svg>
<div class="abs " style="left:1077px;top:691.3px;width:397px;height:11px;background:#383838;"></div>
<div class="abs " style="left:1087.5px;top:692.3px;width:365.5px;height:9.4px;background:#606060;border-radius:4.5px"></div>
<svg class="abs" style="left:1077px;top:691px" width="8" height="12"><path d="M6.6 1.4 L1.6 6 L6.6 10.6 Z" fill="#c4c4c4"/></svg>
<svg class="abs" style="left:1464px;top:691px" width="8" height="12"><path d="M1.2 1.4 L6.2 6 L1.2 10.6 Z" fill="#c4c4c4"/></svg>
<div class="abs " style="left:1071px;top:706.5px;width:417px;height:1px;background:#363636;"></div>
<div class="t" style="left:1080.30px;top:712.69px;font-size:11px;line-height:15px;font-weight:bold;-webkit-text-stroke:0;color:#c8c8c8;letter-spacing:0.134px;">Notes:  MyMaterial</div>
<div class="abs " style="left:1071px;top:726.3px;width:407px;height:14.4px;background:#2b2b2b;"></div>
<div class="abs " style="left:1478px;top:726.5px;width:12px;height:14.2px;background:#383838;"></div>
<svg class="abs" style="left:1478px;top:729px" width="12" height="10"><path d="M1 2.7 L5.5 8.2 L10 2.7 Z" fill="#c4c4c4"/></svg>
<div class="abs " style="left:1068px;top:746px;width:138px;height:26px;background:#5d5d5d;box-shadow:inset 0 0 0 1px #646464;border-radius:1px"></div>
<div class="t" style="left:1122.25px;top:752.15px;font-size:11.5px;line-height:15px;color:#eeeeee;letter-spacing:-0.491px;">Select</div>
<div class="abs " style="left:1208px;top:746px;width:144px;height:26px;background:#5d5d5d;box-shadow:inset 0 0 0 1px #646464;border-radius:1px"></div>
<div class="t" style="left:1240.50px;top:752.15px;font-size:11.5px;line-height:15px;color:#eeeeee;letter-spacing:0.167px;">Load Attributes</div>
<div class="abs " style="left:1354.5px;top:746px;width:139.5px;height:26px;background:#5d5d5d;box-shadow:inset 0 0 0 1px #646464;border-radius:1px"></div>
<div class="t" style="left:1400.75px;top:752.15px;font-size:11.5px;line-height:15px;color:#eeeeee;letter-spacing:-0.480px;">Copy Tab</div>
<svg class="abs" style="left:1080px;top:500px" width="412" height="54"><path d="M7.9 26.5 a200.5 19.6 0 1 0 401 0 a200.5 19.6 0 1 0 -401 0 Z M12.9 26.5 a195.5 14.5 0 1 0 391 0 a195.5 14.5 0 1 0 -391 0 Z" fill="#ed1c24" fill-rule="evenodd"/></svg>

</body></html>
